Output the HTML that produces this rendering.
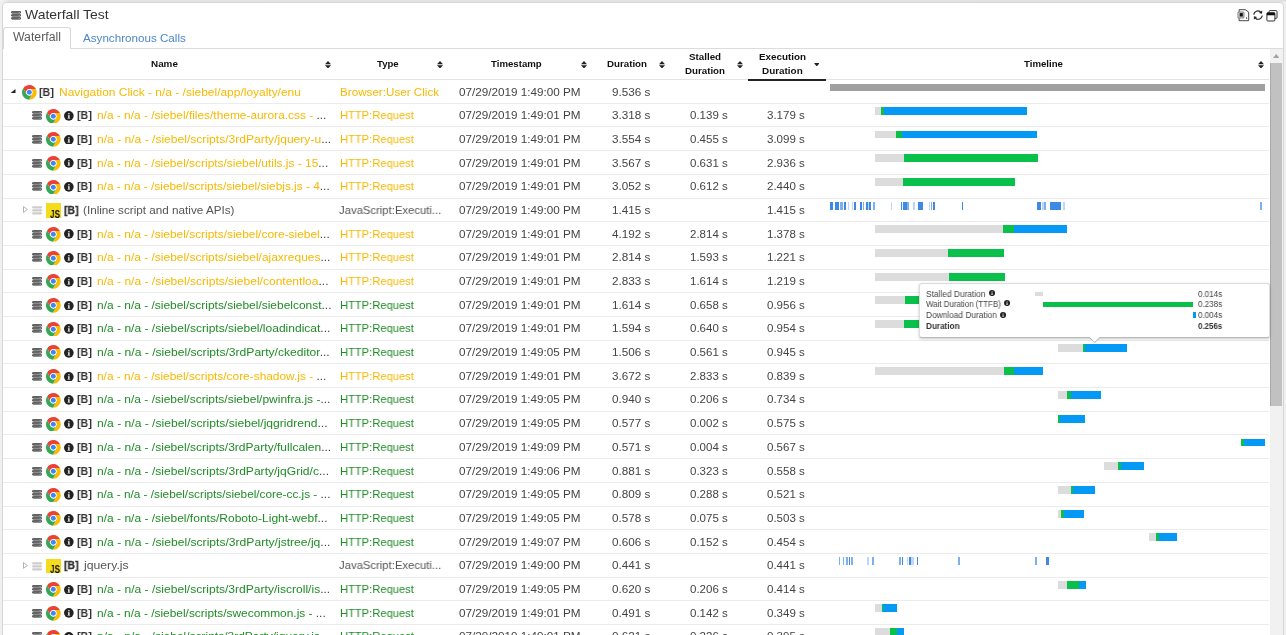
<!DOCTYPE html>
<html><head><meta charset="utf-8"><title>Waterfall Test</title>
<style>
html,body{margin:0;padding:0;}
body{width:1286px;height:635px;overflow:hidden;background:#f0f0f0;position:relative;font-family:"Liberation Sans", sans-serif;}
.ab{position:absolute;}
.t{position:absolute;white-space:pre;will-change:transform;}
</style></head><body>

<div class="ab" style="left:0;top:0;width:1286px;height:2.4px;background:linear-gradient(90deg,#f4f4f4 0,#e3e3e3 10px,#e2e2e2 100%)"></div>
<div class="ab" style="left:2px;top:2px;width:1282.3px;height:640px;background:#fff;border:1px solid #d6d6d6;border-radius:4px;box-sizing:border-box"></div>
<svg class="ab" style="left:11px;top:11px" width="10.2" height="9" viewBox="0 0 10.2 9"><rect x="0.35" y="0.45" width="9.5" height="1.7" rx="0.85" fill="#7a7a7a" stroke="#333" stroke-width="0.7"/><rect x="7.7" y="0.9" width="1" height="0.8" fill="#c8c8c8"/><rect x="0.35" y="3.45" width="9.5" height="1.7" rx="0.85" fill="#7a7a7a" stroke="#333" stroke-width="0.7"/><rect x="7.7" y="3.9" width="1" height="0.8" fill="#c8c8c8"/><rect x="0.35" y="6.45" width="9.5" height="1.7" rx="0.85" fill="#7a7a7a" stroke="#333" stroke-width="0.7"/><rect x="7.7" y="6.9" width="1" height="0.8" fill="#c8c8c8"/></svg>
<div class="t" style="left:25.25px;top:8.32px;font-size:13px;line-height:14.95px;color:#333;font-weight:normal;transform:scaleX(1.0727);transform-origin:0 0;">Waterfall Test</div>
<div class="ab" style="left:3px;top:48px;width:1280px;height:1px;background:#dcdcdc"></div>
<div class="ab" style="left:2.6px;top:27px;width:68px;height:22px;background:#fff;border:1px solid #d8d8d8;border-bottom:none;border-radius:3px 3px 0 0;box-sizing:border-box"></div>
<div class="t" style="left:12.85px;top:31.24px;font-size:12px;line-height:13.8px;color:#5a5a5a;font-weight:normal;transform:scaleX(1.0214);transform-origin:0 0;">Waterfall</div>
<div class="t" style="left:82.95px;top:31.6px;font-size:11.5px;line-height:13.22px;color:#4a88cc;font-weight:normal;transform:scaleX(1.0116);transform-origin:0 0;">Asynchronous Calls</div>
<div class="ab" style="left:3px;top:79px;width:1266px;height:1px;background:#e3e3e3"></div>
<div class="ab" style="left:748px;top:78.6px;width:77.5px;height:2px;background:#222"></div>


<svg class="ab" style="left:1237px;top:9px" width="13" height="13" viewBox="0 0 13 13">
 <path d="M2.1 0.7 H8.3 L11.7 3.1 V11.7 H2.1 Z" fill="#fff" stroke="#333" stroke-width="0.9"/>
 <rect x="0.4" y="2.4" width="7.1" height="7.1" rx="1.5" fill="#8a8a8a"/>
 <rect x="1.4" y="3.4" width="5.1" height="5.1" rx="0.8" fill="#c9c9c9"/>
 <rect x="2.7" y="4.1" width="3.1" height="3.4" fill="#111"/>
 <rect x="9.2" y="8.3" width="0.9" height="1.6" fill="#333"/>
</svg>
<svg class="ab" style="left:1252.9px;top:9.7px" width="10" height="10" viewBox="0 0 10 10">
 <path d="M0.7 4.6 A4.2 4.2 0 0 1 7.6 1.9" fill="none" stroke="#222" stroke-width="1.15"/>
 <path d="M9.1 0.4 L9.1 3.7 L5.9 3.0 Z" fill="#222"/>
 <path d="M9.3 5.5 A4.2 4.2 0 0 1 2.4 8.2" fill="none" stroke="#222" stroke-width="1.15"/>
 <path d="M0.9 9.6 L0.9 6.3 L4.1 7.0 Z" fill="#222"/>
</svg>
<svg class="ab" style="left:1265.6px;top:10px" width="12" height="12" viewBox="0 0 12 12">
 <rect x="3.1" y="0.6" width="7.9" height="7.8" rx="1" fill="#fff" stroke="#333" stroke-width="1"/>
 <rect x="0.9" y="2.7" width="8" height="8.3" rx="1" fill="#fff" stroke="#333" stroke-width="1"/>
 <rect x="0.9" y="2.7" width="8" height="2.6" fill="#111"/>
</svg>

<div class="t" style="left:151.35px;top:59.35px;font-size:9.5px;line-height:10.92px;color:#111;font-weight:bold;transform:scaleX(1.0395);transform-origin:0 0;">Name</div>
<svg class="ab" style="left:325px;top:60.7px" width="6" height="7.5" viewBox="0 0 6 7.5"><path d="M3 0 L6 3.2 H0 Z M0 4.3 H6 L3 7.5 Z" fill="#222"/></svg>
<div class="t" style="left:376.95px;top:59.35px;font-size:9.5px;line-height:10.92px;color:#111;font-weight:bold;transform:scaleX(1.0107);transform-origin:0 0;">Type</div>
<svg class="ab" style="left:436.5px;top:60.7px" width="6" height="7.5" viewBox="0 0 6 7.5"><path d="M3 0 L6 3.2 H0 Z M0 4.3 H6 L3 7.5 Z" fill="#222"/></svg>
<div class="t" style="left:490.75px;top:59.35px;font-size:9.5px;line-height:10.92px;color:#111;font-weight:bold;transform:scaleX(1.0144);transform-origin:0 0;">Timestamp</div>
<svg class="ab" style="left:581.1px;top:60.7px" width="6" height="7.5" viewBox="0 0 6 7.5"><path d="M3 0 L6 3.2 H0 Z M0 4.3 H6 L3 7.5 Z" fill="#222"/></svg>
<div class="t" style="left:606.95px;top:59.35px;font-size:9.5px;line-height:10.92px;color:#111;font-weight:bold;transform:scaleX(1.0242);transform-origin:0 0;">Duration</div>
<svg class="ab" style="left:659px;top:60.7px" width="6" height="7.5" viewBox="0 0 6 7.5"><path d="M3 0 L6 3.2 H0 Z M0 4.3 H6 L3 7.5 Z" fill="#222"/></svg>
<div class="t" style="left:688.55px;top:51.85px;font-size:9.5px;line-height:10.92px;color:#111;font-weight:bold;transform:scaleX(1.0305);transform-origin:0 0;">Stalled</div>
<div class="t" style="left:684.75px;top:66.35px;font-size:9.5px;line-height:10.92px;color:#111;font-weight:bold;transform:scaleX(1.0242);transform-origin:0 0;">Duration</div>
<svg class="ab" style="left:736.5px;top:60.7px" width="6" height="7.5" viewBox="0 0 6 7.5"><path d="M3 0 L6 3.2 H0 Z M0 4.3 H6 L3 7.5 Z" fill="#222"/></svg>
<div class="t" style="left:758.65px;top:51.85px;font-size:9.5px;line-height:10.92px;color:#111;font-weight:bold;transform:scaleX(1.0330);transform-origin:0 0;">Execution</div>
<div class="t" style="left:761.85px;top:66.35px;font-size:9.5px;line-height:10.92px;color:#111;font-weight:bold;transform:scaleX(1.0421);transform-origin:0 0;">Duration</div>
<svg class="ab" style="left:813.9px;top:62.5px" width="5.6" height="3.5" viewBox="0 0 5.6 3.5"><path d="M0 0 H5.6 L2.8 3.5 Z" fill="#222"/></svg>
<div class="t" style="left:1023.55px;top:59.35px;font-size:9.5px;line-height:10.92px;color:#111;font-weight:bold;transform:scaleX(1.0138);transform-origin:0 0;">Timeline</div>
<svg class="ab" style="left:1258px;top:60.8px" width="6" height="7.5" viewBox="0 0 6 7.5"><path d="M3 0 L6 3.2 H0 Z M0 4.3 H6 L3 7.5 Z" fill="#222"/></svg>
<div class="ab" style="left:3px;top:102.79px;width:1266px;height:1px;background:#ececec"></div>
<svg class="ab" style="left:10.4px;top:88.6px" width="5.5" height="4.5" viewBox="0 0 5.5 4.5"><path d="M5.5 0 V4.5 H0 Z" fill="#222"/></svg>
<svg class="ab" style="left:22.05px;top:85.05px" width="14.7" height="14.7" viewBox="-10 -10 20 20"><path d="M0.000 -4.500 L8.930 -4.500 A10 10 0 0 0 -8.362 -5.484 L-3.897 2.250 A4.5 4.5 0 0 1 0.000 -4.500 Z" fill="#ea4335"/><path d="M0.000 -4.500 L8.930 -4.500 A10 10 0 0 0 -8.362 -5.484 L-3.897 2.250 A4.5 4.5 0 0 1 0.000 -4.500 Z" fill="#fbbc05" transform="rotate(120)"/><path d="M0.000 -4.500 L8.930 -4.500 A10 10 0 0 0 -8.362 -5.484 L-3.897 2.250 A4.5 4.5 0 0 1 0.000 -4.500 Z" fill="#34a853" transform="rotate(240)"/><circle r="4.15" fill="#fff"/><circle r="3.4" fill="#4285f4"/></svg>
<div class="t" style="left:38.85px;top:85.5px;font-size:11.5px;line-height:13.22px;color:#333;font-weight:bold;transform:scaleX(0.9272);transform-origin:0 0;">[B]</div>
<div class="t" style="left:59.05px;top:85.5px;font-size:11.5px;line-height:13.22px;color:#f8b800;font-weight:-webkit-text-stroke:0.15px #f8b800;;transform:scaleX(1.0396);transform-origin:0 0;">Navigation Click - n/a - /siebel/app/loyalty/enu</div>
<div class="t" style="left:339.95px;top:85.5px;font-size:11.5px;line-height:13.22px;color:#f8b800;font-weight:-webkit-text-stroke:0.15px #f8b800;;transform:scaleX(1.0135);transform-origin:0 0;">Browser:User Click</div>
<div class="t" style="left:458.85px;top:85.5px;font-size:11.5px;line-height:13.22px;color:#444;font-weight:normal;transform:scaleX(1.0162);transform-origin:0 0;">07/29/2019 1:49:00 PM</div>
<div class="t" style="left:612.15px;top:85.5px;font-size:11.5px;line-height:13.22px;color:#444;font-weight:normal;transform:scaleX(1.0180);transform-origin:0 0;">9.536 s</div>
<div class="ab" style="left:829.8px;top:83.5px;width:435.5px;height:7.6px;background:#a0a0a0"></div>
<div class="ab" style="left:3px;top:126.48px;width:1266px;height:1px;background:#ececec"></div>
<svg class="ab" style="left:32.3px;top:111px" width="10.2" height="9" viewBox="0 0 10.2 9"><rect x="0.35" y="0.45" width="9.5" height="1.7" rx="0.85" fill="#7a7a7a" stroke="#333" stroke-width="0.7"/><rect x="7.7" y="0.9" width="1" height="0.8" fill="#c8c8c8"/><rect x="0.35" y="3.45" width="9.5" height="1.7" rx="0.85" fill="#7a7a7a" stroke="#333" stroke-width="0.7"/><rect x="7.7" y="3.9" width="1" height="0.8" fill="#c8c8c8"/><rect x="0.35" y="6.45" width="9.5" height="1.7" rx="0.85" fill="#7a7a7a" stroke="#333" stroke-width="0.7"/><rect x="7.7" y="6.9" width="1" height="0.8" fill="#c8c8c8"/></svg>
<svg class="ab" style="left:46.2px;top:108.59px" width="14.7" height="14.7" viewBox="-10 -10 20 20"><path d="M0.000 -4.500 L8.930 -4.500 A10 10 0 0 0 -8.362 -5.484 L-3.897 2.250 A4.5 4.5 0 0 1 0.000 -4.500 Z" fill="#ea4335"/><path d="M0.000 -4.500 L8.930 -4.500 A10 10 0 0 0 -8.362 -5.484 L-3.897 2.250 A4.5 4.5 0 0 1 0.000 -4.500 Z" fill="#fbbc05" transform="rotate(120)"/><path d="M0.000 -4.500 L8.930 -4.500 A10 10 0 0 0 -8.362 -5.484 L-3.897 2.250 A4.5 4.5 0 0 1 0.000 -4.500 Z" fill="#34a853" transform="rotate(240)"/><circle r="4.15" fill="#fff"/><circle r="3.4" fill="#4285f4"/></svg>
<svg class="ab" style="left:64.2px;top:110.99px" width="9.7" height="9.7" viewBox="-5 -5 10 10"><circle r="5" fill="#222"/><circle cx="0.1" cy="-2.2" r="0.75" fill="#fff"/><path d="M-1.1 -0.7 H0.75 V2.1 H1.4 V2.8 H-1.4 V2.1 H-0.65 V-0.1 H-1.1 Z" fill="#fff"/></svg>
<div class="t" style="left:76.95px;top:109.19px;font-size:11.5px;line-height:13.22px;color:#333;font-weight:bold;transform:scaleX(0.9272);transform-origin:0 0;">[B]</div>
<div class="t" style="left:97.15px;top:109.19px;font-size:11.5px;line-height:13.22px;color:#f8b800;font-weight:-webkit-text-stroke:0.15px #f8b800;;transform:scaleX(1.0344);transform-origin:0 0;">n/a - n/a - /siebel/files/theme-aurora.css - <span style="color:#444;-webkit-text-stroke:0">...</span></div>
<div class="t" style="left:339.95px;top:109.19px;font-size:11.5px;line-height:13.22px;color:#f8b800;font-weight:-webkit-text-stroke:0.15px #f8b800;;transform:scaleX(0.9717);transform-origin:0 0;">HTTP:Request</div>
<div class="t" style="left:458.85px;top:109.19px;font-size:11.5px;line-height:13.22px;color:#444;font-weight:normal;transform:scaleX(1.0162);transform-origin:0 0;">07/29/2019 1:49:01 PM</div>
<div class="t" style="left:612.15px;top:109.19px;font-size:11.5px;line-height:13.22px;color:#444;font-weight:normal;transform:scaleX(1.0180);transform-origin:0 0;">3.318 s</div>
<div class="t" style="left:690.15px;top:109.19px;font-size:11.5px;line-height:13.22px;color:#444;font-weight:normal;transform:scaleX(0.9995);transform-origin:0 0;">0.139 s</div>
<div class="t" style="left:767.45px;top:109.19px;font-size:11.5px;line-height:13.22px;color:#444;font-weight:normal;transform:scaleX(1.0021);transform-origin:0 0;">3.179 s</div>
<div class="ab" style="left:875px;top:106.89px;width:6.6px;height:7.9px;background:#dcdcdc"></div>
<div class="ab" style="left:881px;top:106.89px;width:3.2px;height:7.9px;background:#08c04a"></div>
<div class="ab" style="left:883.6px;top:106.89px;width:143px;height:7.9px;background:#0399f5"></div>
<div class="ab" style="left:3px;top:150.17px;width:1266px;height:1px;background:#ececec"></div>
<svg class="ab" style="left:32.3px;top:135px" width="10.2" height="9" viewBox="0 0 10.2 9"><rect x="0.35" y="0.45" width="9.5" height="1.7" rx="0.85" fill="#7a7a7a" stroke="#333" stroke-width="0.7"/><rect x="7.7" y="0.9" width="1" height="0.8" fill="#c8c8c8"/><rect x="0.35" y="3.45" width="9.5" height="1.7" rx="0.85" fill="#7a7a7a" stroke="#333" stroke-width="0.7"/><rect x="7.7" y="3.9" width="1" height="0.8" fill="#c8c8c8"/><rect x="0.35" y="6.45" width="9.5" height="1.7" rx="0.85" fill="#7a7a7a" stroke="#333" stroke-width="0.7"/><rect x="7.7" y="6.9" width="1" height="0.8" fill="#c8c8c8"/></svg>
<svg class="ab" style="left:46.2px;top:132.28px" width="14.7" height="14.7" viewBox="-10 -10 20 20"><path d="M0.000 -4.500 L8.930 -4.500 A10 10 0 0 0 -8.362 -5.484 L-3.897 2.250 A4.5 4.5 0 0 1 0.000 -4.500 Z" fill="#ea4335"/><path d="M0.000 -4.500 L8.930 -4.500 A10 10 0 0 0 -8.362 -5.484 L-3.897 2.250 A4.5 4.5 0 0 1 0.000 -4.500 Z" fill="#fbbc05" transform="rotate(120)"/><path d="M0.000 -4.500 L8.930 -4.500 A10 10 0 0 0 -8.362 -5.484 L-3.897 2.250 A4.5 4.5 0 0 1 0.000 -4.500 Z" fill="#34a853" transform="rotate(240)"/><circle r="4.15" fill="#fff"/><circle r="3.4" fill="#4285f4"/></svg>
<svg class="ab" style="left:64.2px;top:134.68px" width="9.7" height="9.7" viewBox="-5 -5 10 10"><circle r="5" fill="#222"/><circle cx="0.1" cy="-2.2" r="0.75" fill="#fff"/><path d="M-1.1 -0.7 H0.75 V2.1 H1.4 V2.8 H-1.4 V2.1 H-0.65 V-0.1 H-1.1 Z" fill="#fff"/></svg>
<div class="t" style="left:76.95px;top:132.88px;font-size:11.5px;line-height:13.22px;color:#333;font-weight:bold;transform:scaleX(0.9272);transform-origin:0 0;">[B]</div>
<div class="t" style="left:97.15px;top:132.88px;font-size:11.5px;line-height:13.22px;color:#f8b800;font-weight:-webkit-text-stroke:0.15px #f8b800;;transform:scaleX(1.0499);transform-origin:0 0;">n/a - n/a - /siebel/scripts/3rdParty/jquery-u<span style="color:#444;-webkit-text-stroke:0">...</span></div>
<div class="t" style="left:339.95px;top:132.88px;font-size:11.5px;line-height:13.22px;color:#f8b800;font-weight:-webkit-text-stroke:0.15px #f8b800;;transform:scaleX(0.9717);transform-origin:0 0;">HTTP:Request</div>
<div class="t" style="left:458.85px;top:132.88px;font-size:11.5px;line-height:13.22px;color:#444;font-weight:normal;transform:scaleX(1.0162);transform-origin:0 0;">07/29/2019 1:49:01 PM</div>
<div class="t" style="left:612.15px;top:132.88px;font-size:11.5px;line-height:13.22px;color:#444;font-weight:normal;transform:scaleX(1.0180);transform-origin:0 0;">3.554 s</div>
<div class="t" style="left:690.15px;top:132.88px;font-size:11.5px;line-height:13.22px;color:#444;font-weight:normal;transform:scaleX(0.9995);transform-origin:0 0;">0.455 s</div>
<div class="t" style="left:767.45px;top:132.88px;font-size:11.5px;line-height:13.22px;color:#444;font-weight:normal;transform:scaleX(1.0021);transform-origin:0 0;">3.099 s</div>
<div class="ab" style="left:875px;top:130.58px;width:21.5px;height:7.9px;background:#dcdcdc"></div>
<div class="ab" style="left:895.9px;top:130.58px;width:6.9px;height:7.9px;background:#08c04a"></div>
<div class="ab" style="left:902.2px;top:130.58px;width:135.3px;height:7.9px;background:#0399f5"></div>
<div class="ab" style="left:3px;top:173.86px;width:1266px;height:1px;background:#ececec"></div>
<svg class="ab" style="left:32.3px;top:159px" width="10.2" height="9" viewBox="0 0 10.2 9"><rect x="0.35" y="0.45" width="9.5" height="1.7" rx="0.85" fill="#7a7a7a" stroke="#333" stroke-width="0.7"/><rect x="7.7" y="0.9" width="1" height="0.8" fill="#c8c8c8"/><rect x="0.35" y="3.45" width="9.5" height="1.7" rx="0.85" fill="#7a7a7a" stroke="#333" stroke-width="0.7"/><rect x="7.7" y="3.9" width="1" height="0.8" fill="#c8c8c8"/><rect x="0.35" y="6.45" width="9.5" height="1.7" rx="0.85" fill="#7a7a7a" stroke="#333" stroke-width="0.7"/><rect x="7.7" y="6.9" width="1" height="0.8" fill="#c8c8c8"/></svg>
<svg class="ab" style="left:46.2px;top:155.97px" width="14.7" height="14.7" viewBox="-10 -10 20 20"><path d="M0.000 -4.500 L8.930 -4.500 A10 10 0 0 0 -8.362 -5.484 L-3.897 2.250 A4.5 4.5 0 0 1 0.000 -4.500 Z" fill="#ea4335"/><path d="M0.000 -4.500 L8.930 -4.500 A10 10 0 0 0 -8.362 -5.484 L-3.897 2.250 A4.5 4.5 0 0 1 0.000 -4.500 Z" fill="#fbbc05" transform="rotate(120)"/><path d="M0.000 -4.500 L8.930 -4.500 A10 10 0 0 0 -8.362 -5.484 L-3.897 2.250 A4.5 4.5 0 0 1 0.000 -4.500 Z" fill="#34a853" transform="rotate(240)"/><circle r="4.15" fill="#fff"/><circle r="3.4" fill="#4285f4"/></svg>
<svg class="ab" style="left:64.2px;top:158.37px" width="9.7" height="9.7" viewBox="-5 -5 10 10"><circle r="5" fill="#222"/><circle cx="0.1" cy="-2.2" r="0.75" fill="#fff"/><path d="M-1.1 -0.7 H0.75 V2.1 H1.4 V2.8 H-1.4 V2.1 H-0.65 V-0.1 H-1.1 Z" fill="#fff"/></svg>
<div class="t" style="left:76.95px;top:156.57px;font-size:11.5px;line-height:13.22px;color:#333;font-weight:bold;transform:scaleX(0.9272);transform-origin:0 0;">[B]</div>
<div class="t" style="left:97.15px;top:156.57px;font-size:11.5px;line-height:13.22px;color:#f8b800;font-weight:-webkit-text-stroke:0.15px #f8b800;;transform:scaleX(1.0365);transform-origin:0 0;">n/a - n/a - /siebel/scripts/siebel/utils.js - 15<span style="color:#444;-webkit-text-stroke:0">...</span></div>
<div class="t" style="left:339.95px;top:156.57px;font-size:11.5px;line-height:13.22px;color:#f8b800;font-weight:-webkit-text-stroke:0.15px #f8b800;;transform:scaleX(0.9717);transform-origin:0 0;">HTTP:Request</div>
<div class="t" style="left:458.85px;top:156.57px;font-size:11.5px;line-height:13.22px;color:#444;font-weight:normal;transform:scaleX(1.0162);transform-origin:0 0;">07/29/2019 1:49:01 PM</div>
<div class="t" style="left:612.15px;top:156.57px;font-size:11.5px;line-height:13.22px;color:#444;font-weight:normal;transform:scaleX(1.0180);transform-origin:0 0;">3.567 s</div>
<div class="t" style="left:690.15px;top:156.57px;font-size:11.5px;line-height:13.22px;color:#444;font-weight:normal;transform:scaleX(0.9995);transform-origin:0 0;">0.631 s</div>
<div class="t" style="left:767.45px;top:156.57px;font-size:11.5px;line-height:13.22px;color:#444;font-weight:normal;transform:scaleX(1.0021);transform-origin:0 0;">2.936 s</div>
<div class="ab" style="left:875px;top:154.27px;width:29.4px;height:7.9px;background:#dcdcdc"></div>
<div class="ab" style="left:903.8px;top:154.27px;width:134.6px;height:7.9px;background:#08c04a"></div>
<div class="ab" style="left:3px;top:197.55px;width:1266px;height:1px;background:#ececec"></div>
<svg class="ab" style="left:32.3px;top:182px" width="10.2" height="9" viewBox="0 0 10.2 9"><rect x="0.35" y="0.45" width="9.5" height="1.7" rx="0.85" fill="#7a7a7a" stroke="#333" stroke-width="0.7"/><rect x="7.7" y="0.9" width="1" height="0.8" fill="#c8c8c8"/><rect x="0.35" y="3.45" width="9.5" height="1.7" rx="0.85" fill="#7a7a7a" stroke="#333" stroke-width="0.7"/><rect x="7.7" y="3.9" width="1" height="0.8" fill="#c8c8c8"/><rect x="0.35" y="6.45" width="9.5" height="1.7" rx="0.85" fill="#7a7a7a" stroke="#333" stroke-width="0.7"/><rect x="7.7" y="6.9" width="1" height="0.8" fill="#c8c8c8"/></svg>
<svg class="ab" style="left:46.2px;top:179.66px" width="14.7" height="14.7" viewBox="-10 -10 20 20"><path d="M0.000 -4.500 L8.930 -4.500 A10 10 0 0 0 -8.362 -5.484 L-3.897 2.250 A4.5 4.5 0 0 1 0.000 -4.500 Z" fill="#ea4335"/><path d="M0.000 -4.500 L8.930 -4.500 A10 10 0 0 0 -8.362 -5.484 L-3.897 2.250 A4.5 4.5 0 0 1 0.000 -4.500 Z" fill="#fbbc05" transform="rotate(120)"/><path d="M0.000 -4.500 L8.930 -4.500 A10 10 0 0 0 -8.362 -5.484 L-3.897 2.250 A4.5 4.5 0 0 1 0.000 -4.500 Z" fill="#34a853" transform="rotate(240)"/><circle r="4.15" fill="#fff"/><circle r="3.4" fill="#4285f4"/></svg>
<svg class="ab" style="left:64.2px;top:182.06px" width="9.7" height="9.7" viewBox="-5 -5 10 10"><circle r="5" fill="#222"/><circle cx="0.1" cy="-2.2" r="0.75" fill="#fff"/><path d="M-1.1 -0.7 H0.75 V2.1 H1.4 V2.8 H-1.4 V2.1 H-0.65 V-0.1 H-1.1 Z" fill="#fff"/></svg>
<div class="t" style="left:76.95px;top:180.26px;font-size:11.5px;line-height:13.22px;color:#333;font-weight:bold;transform:scaleX(0.9272);transform-origin:0 0;">[B]</div>
<div class="t" style="left:97.15px;top:180.26px;font-size:11.5px;line-height:13.22px;color:#f8b800;font-weight:-webkit-text-stroke:0.15px #f8b800;;transform:scaleX(1.0314);transform-origin:0 0;">n/a - n/a - /siebel/scripts/siebel/siebjs.js - 4<span style="color:#444;-webkit-text-stroke:0">...</span></div>
<div class="t" style="left:339.95px;top:180.26px;font-size:11.5px;line-height:13.22px;color:#f8b800;font-weight:-webkit-text-stroke:0.15px #f8b800;;transform:scaleX(0.9717);transform-origin:0 0;">HTTP:Request</div>
<div class="t" style="left:458.85px;top:180.26px;font-size:11.5px;line-height:13.22px;color:#444;font-weight:normal;transform:scaleX(1.0162);transform-origin:0 0;">07/29/2019 1:49:01 PM</div>
<div class="t" style="left:612.15px;top:180.26px;font-size:11.5px;line-height:13.22px;color:#444;font-weight:normal;transform:scaleX(1.0180);transform-origin:0 0;">3.052 s</div>
<div class="t" style="left:690.15px;top:180.26px;font-size:11.5px;line-height:13.22px;color:#444;font-weight:normal;transform:scaleX(0.9995);transform-origin:0 0;">0.612 s</div>
<div class="t" style="left:767.45px;top:180.26px;font-size:11.5px;line-height:13.22px;color:#444;font-weight:normal;transform:scaleX(1.0021);transform-origin:0 0;">2.440 s</div>
<div class="ab" style="left:875px;top:177.96px;width:28.4px;height:7.9px;background:#dcdcdc"></div>
<div class="ab" style="left:902.8px;top:177.96px;width:112.3px;height:7.9px;background:#08c04a"></div>
<div class="ab" style="left:3px;top:221.24px;width:1266px;height:1px;background:#ececec"></div>
<svg class="ab" style="left:23.3px;top:206.25px" width="5" height="7" viewBox="0 0 5 7"><path d="M0.5 0.6 L4.4 3.5 L0.5 6.4 Z" fill="none" stroke="#aaa" stroke-width="0.9"/></svg>
<svg class="ab" style="left:32.4px;top:206px" width="10.2" height="9" viewBox="0 0 10.2 9"><rect x="0" y="0.15" width="10.2" height="2.3" rx="1.1" fill="#cdcdcd"/><rect x="0" y="3.15" width="10.2" height="2.3" rx="1.1" fill="#cdcdcd"/><rect x="0" y="6.15" width="10.2" height="2.3" rx="1.1" fill="#cdcdcd"/></svg>
<div class="ab" style="left:46.1px;top:203.25px;width:14.8px;height:14.4px;background:#f4dc1c"></div>
<div class="t" style="left:50.25px;top:208.53px;font-size:10px;line-height:11.5px;color:#111;font-weight:bold;transform:scaleX(0.8258);transform-origin:0 0;">JS</div>
<div class="t" style="left:63.75px;top:203.95px;font-size:11.5px;line-height:13.22px;color:#333;font-weight:bold;transform:scaleX(0.9084);transform-origin:0 0;-webkit-text-stroke:0.3px #333;">[B]</div>
<div class="t" style="left:83.35px;top:203.95px;font-size:11.5px;line-height:13.22px;color:#555;font-weight:normal;transform:scaleX(1.0172);transform-origin:0 0;">(Inline script and native APIs)</div>
<div class="t" style="left:338.85px;top:203.95px;font-size:11.5px;line-height:13.22px;color:#555;font-weight:;transform:scaleX(0.9820);transform-origin:0 0;">JavaScript:Executi...</div>
<div class="t" style="left:458.85px;top:203.95px;font-size:11.5px;line-height:13.22px;color:#444;font-weight:normal;transform:scaleX(1.0162);transform-origin:0 0;">07/29/2019 1:49:00 PM</div>
<div class="t" style="left:612.15px;top:203.95px;font-size:11.5px;line-height:13.22px;color:#444;font-weight:normal;transform:scaleX(1.0180);transform-origin:0 0;">1.415 s</div>
<div class="t" style="left:767.45px;top:203.95px;font-size:11.5px;line-height:13.22px;color:#444;font-weight:normal;transform:scaleX(1.0021);transform-origin:0 0;">1.415 s</div>
<div class="ab" style="left:830.1px;top:201.75px;width:2.7px;height:8px;background:#3f89e6"></div>
<div class="ab" style="left:834.6px;top:201.75px;width:4.5px;height:8px;background:#3f89e6"></div>
<div class="ab" style="left:839.8px;top:201.75px;width:3.2px;height:8px;background:#7cb0ee"></div>
<div class="ab" style="left:843.7px;top:201.75px;width:2.6px;height:8px;background:#3f89e6"></div>
<div class="ab" style="left:847.9px;top:201.75px;width:1.4px;height:8px;background:#bcd7f7"></div>
<div class="ab" style="left:851.9px;top:201.75px;width:1.1px;height:8px;background:#bcd7f7"></div>
<div class="ab" style="left:853.9px;top:201.75px;width:1.7px;height:8px;background:#3f89e6"></div>
<div class="ab" style="left:860.1px;top:201.75px;width:1.8px;height:8px;background:#3f89e6"></div>
<div class="ab" style="left:863px;top:201.75px;width:1px;height:8px;background:#7cb0ee"></div>
<div class="ab" style="left:865.9px;top:201.75px;width:1.9px;height:8px;background:#3f89e6"></div>
<div class="ab" style="left:867.8px;top:201.75px;width:0.9px;height:8px;background:#bcd7f7"></div>
<div class="ab" style="left:868.7px;top:201.75px;width:1.9px;height:8px;background:#3f89e6"></div>
<div class="ab" style="left:872.9px;top:201.75px;width:2.1px;height:8px;background:#7cb0ee"></div>
<div class="ab" style="left:891.1px;top:201.75px;width:1.4px;height:8px;background:#bcd7f7"></div>
<div class="ab" style="left:900.6px;top:201.75px;width:1.3px;height:8px;background:#3f89e6"></div>
<div class="ab" style="left:903.4px;top:201.75px;width:3.6px;height:8px;background:#3f89e6"></div>
<div class="ab" style="left:907px;top:201.75px;width:1.9px;height:8px;background:#7cb0ee"></div>
<div class="ab" style="left:913.1px;top:201.75px;width:1.5px;height:8px;background:#bcd7f7"></div>
<div class="ab" style="left:918px;top:201.75px;width:5.1px;height:8px;background:#3f89e6"></div>
<div class="ab" style="left:929px;top:201.75px;width:0.9px;height:8px;background:#bcd7f7"></div>
<div class="ab" style="left:930.9px;top:201.75px;width:1.3px;height:8px;background:#7cb0ee"></div>
<div class="ab" style="left:932.9px;top:201.75px;width:2.1px;height:8px;background:#3f89e6"></div>
<div class="ab" style="left:961.9px;top:201.75px;width:1.2px;height:8px;background:#3f89e6"></div>
<div class="ab" style="left:1036.9px;top:201.75px;width:4.5px;height:8px;background:#3f89e6"></div>
<div class="ab" style="left:1041.9px;top:201.75px;width:1.9px;height:8px;background:#bcd7f7"></div>
<div class="ab" style="left:1043.8px;top:201.75px;width:1.8px;height:8px;background:#7cb0ee"></div>
<div class="ab" style="left:1049.8px;top:201.75px;width:11.7px;height:8px;background:#3f89e6"></div>
<div class="ab" style="left:1063.1px;top:201.75px;width:1.8px;height:8px;background:#bcd7f7"></div>
<div class="ab" style="left:1260.2px;top:201.75px;width:1.8px;height:8px;background:#7cb0ee"></div>
<div class="ab" style="left:3px;top:244.93px;width:1266px;height:1px;background:#ececec"></div>
<svg class="ab" style="left:32.3px;top:230px" width="10.2" height="9" viewBox="0 0 10.2 9"><rect x="0.35" y="0.45" width="9.5" height="1.7" rx="0.85" fill="#7a7a7a" stroke="#333" stroke-width="0.7"/><rect x="7.7" y="0.9" width="1" height="0.8" fill="#c8c8c8"/><rect x="0.35" y="3.45" width="9.5" height="1.7" rx="0.85" fill="#7a7a7a" stroke="#333" stroke-width="0.7"/><rect x="7.7" y="3.9" width="1" height="0.8" fill="#c8c8c8"/><rect x="0.35" y="6.45" width="9.5" height="1.7" rx="0.85" fill="#7a7a7a" stroke="#333" stroke-width="0.7"/><rect x="7.7" y="6.9" width="1" height="0.8" fill="#c8c8c8"/></svg>
<svg class="ab" style="left:46.2px;top:227.04px" width="14.7" height="14.7" viewBox="-10 -10 20 20"><path d="M0.000 -4.500 L8.930 -4.500 A10 10 0 0 0 -8.362 -5.484 L-3.897 2.250 A4.5 4.5 0 0 1 0.000 -4.500 Z" fill="#ea4335"/><path d="M0.000 -4.500 L8.930 -4.500 A10 10 0 0 0 -8.362 -5.484 L-3.897 2.250 A4.5 4.5 0 0 1 0.000 -4.500 Z" fill="#fbbc05" transform="rotate(120)"/><path d="M0.000 -4.500 L8.930 -4.500 A10 10 0 0 0 -8.362 -5.484 L-3.897 2.250 A4.5 4.5 0 0 1 0.000 -4.500 Z" fill="#34a853" transform="rotate(240)"/><circle r="4.15" fill="#fff"/><circle r="3.4" fill="#4285f4"/></svg>
<svg class="ab" style="left:64.2px;top:229.44px" width="9.7" height="9.7" viewBox="-5 -5 10 10"><circle r="5" fill="#222"/><circle cx="0.1" cy="-2.2" r="0.75" fill="#fff"/><path d="M-1.1 -0.7 H0.75 V2.1 H1.4 V2.8 H-1.4 V2.1 H-0.65 V-0.1 H-1.1 Z" fill="#fff"/></svg>
<div class="t" style="left:76.95px;top:227.64px;font-size:11.5px;line-height:13.22px;color:#333;font-weight:bold;transform:scaleX(0.9272);transform-origin:0 0;">[B]</div>
<div class="t" style="left:97.15px;top:227.64px;font-size:11.5px;line-height:13.22px;color:#f8b800;font-weight:-webkit-text-stroke:0.15px #f8b800;;transform:scaleX(1.0373);transform-origin:0 0;">n/a - n/a - /siebel/scripts/siebel/core-siebel<span style="color:#444;-webkit-text-stroke:0">...</span></div>
<div class="t" style="left:339.95px;top:227.64px;font-size:11.5px;line-height:13.22px;color:#f8b800;font-weight:-webkit-text-stroke:0.15px #f8b800;;transform:scaleX(0.9717);transform-origin:0 0;">HTTP:Request</div>
<div class="t" style="left:458.85px;top:227.64px;font-size:11.5px;line-height:13.22px;color:#444;font-weight:normal;transform:scaleX(1.0162);transform-origin:0 0;">07/29/2019 1:49:01 PM</div>
<div class="t" style="left:612.15px;top:227.64px;font-size:11.5px;line-height:13.22px;color:#444;font-weight:normal;transform:scaleX(1.0180);transform-origin:0 0;">4.192 s</div>
<div class="t" style="left:690.15px;top:227.64px;font-size:11.5px;line-height:13.22px;color:#444;font-weight:normal;transform:scaleX(0.9995);transform-origin:0 0;">2.814 s</div>
<div class="t" style="left:767.45px;top:227.64px;font-size:11.5px;line-height:13.22px;color:#444;font-weight:normal;transform:scaleX(1.0021);transform-origin:0 0;">1.378 s</div>
<div class="ab" style="left:875px;top:225.34px;width:129px;height:7.9px;background:#dcdcdc"></div>
<div class="ab" style="left:1003.4px;top:225.34px;width:10.8px;height:7.9px;background:#08c04a"></div>
<div class="ab" style="left:1013.6px;top:225.34px;width:53.4px;height:7.9px;background:#0399f5"></div>
<div class="ab" style="left:3px;top:268.62px;width:1266px;height:1px;background:#ececec"></div>
<svg class="ab" style="left:32.3px;top:253px" width="10.2" height="9" viewBox="0 0 10.2 9"><rect x="0.35" y="0.45" width="9.5" height="1.7" rx="0.85" fill="#7a7a7a" stroke="#333" stroke-width="0.7"/><rect x="7.7" y="0.9" width="1" height="0.8" fill="#c8c8c8"/><rect x="0.35" y="3.45" width="9.5" height="1.7" rx="0.85" fill="#7a7a7a" stroke="#333" stroke-width="0.7"/><rect x="7.7" y="3.9" width="1" height="0.8" fill="#c8c8c8"/><rect x="0.35" y="6.45" width="9.5" height="1.7" rx="0.85" fill="#7a7a7a" stroke="#333" stroke-width="0.7"/><rect x="7.7" y="6.9" width="1" height="0.8" fill="#c8c8c8"/></svg>
<svg class="ab" style="left:46.2px;top:250.73px" width="14.7" height="14.7" viewBox="-10 -10 20 20"><path d="M0.000 -4.500 L8.930 -4.500 A10 10 0 0 0 -8.362 -5.484 L-3.897 2.250 A4.5 4.5 0 0 1 0.000 -4.500 Z" fill="#ea4335"/><path d="M0.000 -4.500 L8.930 -4.500 A10 10 0 0 0 -8.362 -5.484 L-3.897 2.250 A4.5 4.5 0 0 1 0.000 -4.500 Z" fill="#fbbc05" transform="rotate(120)"/><path d="M0.000 -4.500 L8.930 -4.500 A10 10 0 0 0 -8.362 -5.484 L-3.897 2.250 A4.5 4.5 0 0 1 0.000 -4.500 Z" fill="#34a853" transform="rotate(240)"/><circle r="4.15" fill="#fff"/><circle r="3.4" fill="#4285f4"/></svg>
<svg class="ab" style="left:64.2px;top:253.13px" width="9.7" height="9.7" viewBox="-5 -5 10 10"><circle r="5" fill="#222"/><circle cx="0.1" cy="-2.2" r="0.75" fill="#fff"/><path d="M-1.1 -0.7 H0.75 V2.1 H1.4 V2.8 H-1.4 V2.1 H-0.65 V-0.1 H-1.1 Z" fill="#fff"/></svg>
<div class="t" style="left:76.95px;top:251.33px;font-size:11.5px;line-height:13.22px;color:#333;font-weight:bold;transform:scaleX(0.9272);transform-origin:0 0;">[B]</div>
<div class="t" style="left:97.15px;top:251.33px;font-size:11.5px;line-height:13.22px;color:#f8b800;font-weight:-webkit-text-stroke:0.15px #f8b800;;transform:scaleX(1.0403);transform-origin:0 0;">n/a - n/a - /siebel/scripts/siebel/ajaxreques<span style="color:#444;-webkit-text-stroke:0">...</span></div>
<div class="t" style="left:339.95px;top:251.33px;font-size:11.5px;line-height:13.22px;color:#f8b800;font-weight:-webkit-text-stroke:0.15px #f8b800;;transform:scaleX(0.9717);transform-origin:0 0;">HTTP:Request</div>
<div class="t" style="left:458.85px;top:251.33px;font-size:11.5px;line-height:13.22px;color:#444;font-weight:normal;transform:scaleX(1.0162);transform-origin:0 0;">07/29/2019 1:49:01 PM</div>
<div class="t" style="left:612.15px;top:251.33px;font-size:11.5px;line-height:13.22px;color:#444;font-weight:normal;transform:scaleX(1.0180);transform-origin:0 0;">2.814 s</div>
<div class="t" style="left:690.15px;top:251.33px;font-size:11.5px;line-height:13.22px;color:#444;font-weight:normal;transform:scaleX(0.9995);transform-origin:0 0;">1.593 s</div>
<div class="t" style="left:767.45px;top:251.33px;font-size:11.5px;line-height:13.22px;color:#444;font-weight:normal;transform:scaleX(1.0021);transform-origin:0 0;">1.221 s</div>
<div class="ab" style="left:875px;top:249.03px;width:73.7px;height:7.9px;background:#dcdcdc"></div>
<div class="ab" style="left:948.1px;top:249.03px;width:56.1px;height:7.9px;background:#08c04a"></div>
<div class="ab" style="left:3px;top:292.31px;width:1266px;height:1px;background:#ececec"></div>
<svg class="ab" style="left:32.3px;top:277px" width="10.2" height="9" viewBox="0 0 10.2 9"><rect x="0.35" y="0.45" width="9.5" height="1.7" rx="0.85" fill="#7a7a7a" stroke="#333" stroke-width="0.7"/><rect x="7.7" y="0.9" width="1" height="0.8" fill="#c8c8c8"/><rect x="0.35" y="3.45" width="9.5" height="1.7" rx="0.85" fill="#7a7a7a" stroke="#333" stroke-width="0.7"/><rect x="7.7" y="3.9" width="1" height="0.8" fill="#c8c8c8"/><rect x="0.35" y="6.45" width="9.5" height="1.7" rx="0.85" fill="#7a7a7a" stroke="#333" stroke-width="0.7"/><rect x="7.7" y="6.9" width="1" height="0.8" fill="#c8c8c8"/></svg>
<svg class="ab" style="left:46.2px;top:274.42px" width="14.7" height="14.7" viewBox="-10 -10 20 20"><path d="M0.000 -4.500 L8.930 -4.500 A10 10 0 0 0 -8.362 -5.484 L-3.897 2.250 A4.5 4.5 0 0 1 0.000 -4.500 Z" fill="#ea4335"/><path d="M0.000 -4.500 L8.930 -4.500 A10 10 0 0 0 -8.362 -5.484 L-3.897 2.250 A4.5 4.5 0 0 1 0.000 -4.500 Z" fill="#fbbc05" transform="rotate(120)"/><path d="M0.000 -4.500 L8.930 -4.500 A10 10 0 0 0 -8.362 -5.484 L-3.897 2.250 A4.5 4.5 0 0 1 0.000 -4.500 Z" fill="#34a853" transform="rotate(240)"/><circle r="4.15" fill="#fff"/><circle r="3.4" fill="#4285f4"/></svg>
<svg class="ab" style="left:64.2px;top:276.82px" width="9.7" height="9.7" viewBox="-5 -5 10 10"><circle r="5" fill="#222"/><circle cx="0.1" cy="-2.2" r="0.75" fill="#fff"/><path d="M-1.1 -0.7 H0.75 V2.1 H1.4 V2.8 H-1.4 V2.1 H-0.65 V-0.1 H-1.1 Z" fill="#fff"/></svg>
<div class="t" style="left:76.95px;top:275.02px;font-size:11.5px;line-height:13.22px;color:#333;font-weight:bold;transform:scaleX(0.9272);transform-origin:0 0;">[B]</div>
<div class="t" style="left:97.15px;top:275.02px;font-size:11.5px;line-height:13.22px;color:#f8b800;font-weight:-webkit-text-stroke:0.15px #f8b800;;transform:scaleX(1.0467);transform-origin:0 0;">n/a - n/a - /siebel/scripts/siebel/contentloa<span style="color:#444;-webkit-text-stroke:0">...</span></div>
<div class="t" style="left:339.95px;top:275.02px;font-size:11.5px;line-height:13.22px;color:#f8b800;font-weight:-webkit-text-stroke:0.15px #f8b800;;transform:scaleX(0.9717);transform-origin:0 0;">HTTP:Request</div>
<div class="t" style="left:458.85px;top:275.02px;font-size:11.5px;line-height:13.22px;color:#444;font-weight:normal;transform:scaleX(1.0162);transform-origin:0 0;">07/29/2019 1:49:01 PM</div>
<div class="t" style="left:612.15px;top:275.02px;font-size:11.5px;line-height:13.22px;color:#444;font-weight:normal;transform:scaleX(1.0180);transform-origin:0 0;">2.833 s</div>
<div class="t" style="left:690.15px;top:275.02px;font-size:11.5px;line-height:13.22px;color:#444;font-weight:normal;transform:scaleX(0.9995);transform-origin:0 0;">1.614 s</div>
<div class="t" style="left:767.45px;top:275.02px;font-size:11.5px;line-height:13.22px;color:#444;font-weight:normal;transform:scaleX(1.0021);transform-origin:0 0;">1.219 s</div>
<div class="ab" style="left:875px;top:272.72px;width:74.6px;height:7.9px;background:#dcdcdc"></div>
<div class="ab" style="left:949px;top:272.72px;width:56.1px;height:7.9px;background:#08c04a"></div>
<div class="ab" style="left:3px;top:316px;width:1266px;height:1px;background:#ececec"></div>
<svg class="ab" style="left:32.3px;top:301px" width="10.2" height="9" viewBox="0 0 10.2 9"><rect x="0.35" y="0.45" width="9.5" height="1.7" rx="0.85" fill="#7a7a7a" stroke="#333" stroke-width="0.7"/><rect x="7.7" y="0.9" width="1" height="0.8" fill="#c8c8c8"/><rect x="0.35" y="3.45" width="9.5" height="1.7" rx="0.85" fill="#7a7a7a" stroke="#333" stroke-width="0.7"/><rect x="7.7" y="3.9" width="1" height="0.8" fill="#c8c8c8"/><rect x="0.35" y="6.45" width="9.5" height="1.7" rx="0.85" fill="#7a7a7a" stroke="#333" stroke-width="0.7"/><rect x="7.7" y="6.9" width="1" height="0.8" fill="#c8c8c8"/></svg>
<svg class="ab" style="left:46.2px;top:298.11px" width="14.7" height="14.7" viewBox="-10 -10 20 20"><path d="M0.000 -4.500 L8.930 -4.500 A10 10 0 0 0 -8.362 -5.484 L-3.897 2.250 A4.5 4.5 0 0 1 0.000 -4.500 Z" fill="#ea4335"/><path d="M0.000 -4.500 L8.930 -4.500 A10 10 0 0 0 -8.362 -5.484 L-3.897 2.250 A4.5 4.5 0 0 1 0.000 -4.500 Z" fill="#fbbc05" transform="rotate(120)"/><path d="M0.000 -4.500 L8.930 -4.500 A10 10 0 0 0 -8.362 -5.484 L-3.897 2.250 A4.5 4.5 0 0 1 0.000 -4.500 Z" fill="#34a853" transform="rotate(240)"/><circle r="4.15" fill="#fff"/><circle r="3.4" fill="#4285f4"/></svg>
<svg class="ab" style="left:64.2px;top:300.51px" width="9.7" height="9.7" viewBox="-5 -5 10 10"><circle r="5" fill="#222"/><circle cx="0.1" cy="-2.2" r="0.75" fill="#fff"/><path d="M-1.1 -0.7 H0.75 V2.1 H1.4 V2.8 H-1.4 V2.1 H-0.65 V-0.1 H-1.1 Z" fill="#fff"/></svg>
<div class="t" style="left:76.95px;top:298.71px;font-size:11.5px;line-height:13.22px;color:#333;font-weight:bold;transform:scaleX(0.9272);transform-origin:0 0;">[B]</div>
<div class="t" style="left:97.15px;top:298.71px;font-size:11.5px;line-height:13.22px;color:#1f8c26;font-weight:-webkit-text-stroke:0.15px #1f8c26;;transform:scaleX(1.0393);transform-origin:0 0;">n/a - n/a - /siebel/scripts/siebel/siebelconst<span style="color:#444;-webkit-text-stroke:0">...</span></div>
<div class="t" style="left:339.95px;top:298.71px;font-size:11.5px;line-height:13.22px;color:#1f8c26;font-weight:-webkit-text-stroke:0.15px #1f8c26;;transform:scaleX(0.9717);transform-origin:0 0;">HTTP:Request</div>
<div class="t" style="left:458.85px;top:298.71px;font-size:11.5px;line-height:13.22px;color:#444;font-weight:normal;transform:scaleX(1.0162);transform-origin:0 0;">07/29/2019 1:49:01 PM</div>
<div class="t" style="left:612.15px;top:298.71px;font-size:11.5px;line-height:13.22px;color:#444;font-weight:normal;transform:scaleX(1.0180);transform-origin:0 0;">1.614 s</div>
<div class="t" style="left:690.15px;top:298.71px;font-size:11.5px;line-height:13.22px;color:#444;font-weight:normal;transform:scaleX(0.9995);transform-origin:0 0;">0.658 s</div>
<div class="t" style="left:767.45px;top:298.71px;font-size:11.5px;line-height:13.22px;color:#444;font-weight:normal;transform:scaleX(1.0021);transform-origin:0 0;">0.956 s</div>
<div class="ab" style="left:875px;top:296.41px;width:30.4px;height:7.9px;background:#dcdcdc"></div>
<div class="ab" style="left:904.8px;top:296.41px;width:25.8px;height:7.9px;background:#08c04a"></div>
<div class="ab" style="left:930px;top:296.41px;width:18.7px;height:7.9px;background:#0399f5"></div>
<div class="ab" style="left:3px;top:339.69px;width:1266px;height:1px;background:#ececec"></div>
<svg class="ab" style="left:32.3px;top:324px" width="10.2" height="9" viewBox="0 0 10.2 9"><rect x="0.35" y="0.45" width="9.5" height="1.7" rx="0.85" fill="#7a7a7a" stroke="#333" stroke-width="0.7"/><rect x="7.7" y="0.9" width="1" height="0.8" fill="#c8c8c8"/><rect x="0.35" y="3.45" width="9.5" height="1.7" rx="0.85" fill="#7a7a7a" stroke="#333" stroke-width="0.7"/><rect x="7.7" y="3.9" width="1" height="0.8" fill="#c8c8c8"/><rect x="0.35" y="6.45" width="9.5" height="1.7" rx="0.85" fill="#7a7a7a" stroke="#333" stroke-width="0.7"/><rect x="7.7" y="6.9" width="1" height="0.8" fill="#c8c8c8"/></svg>
<svg class="ab" style="left:46.2px;top:321.8px" width="14.7" height="14.7" viewBox="-10 -10 20 20"><path d="M0.000 -4.500 L8.930 -4.500 A10 10 0 0 0 -8.362 -5.484 L-3.897 2.250 A4.5 4.5 0 0 1 0.000 -4.500 Z" fill="#ea4335"/><path d="M0.000 -4.500 L8.930 -4.500 A10 10 0 0 0 -8.362 -5.484 L-3.897 2.250 A4.5 4.5 0 0 1 0.000 -4.500 Z" fill="#fbbc05" transform="rotate(120)"/><path d="M0.000 -4.500 L8.930 -4.500 A10 10 0 0 0 -8.362 -5.484 L-3.897 2.250 A4.5 4.5 0 0 1 0.000 -4.500 Z" fill="#34a853" transform="rotate(240)"/><circle r="4.15" fill="#fff"/><circle r="3.4" fill="#4285f4"/></svg>
<svg class="ab" style="left:64.2px;top:324.2px" width="9.7" height="9.7" viewBox="-5 -5 10 10"><circle r="5" fill="#222"/><circle cx="0.1" cy="-2.2" r="0.75" fill="#fff"/><path d="M-1.1 -0.7 H0.75 V2.1 H1.4 V2.8 H-1.4 V2.1 H-0.65 V-0.1 H-1.1 Z" fill="#fff"/></svg>
<div class="t" style="left:76.95px;top:322.4px;font-size:11.5px;line-height:13.22px;color:#333;font-weight:bold;transform:scaleX(0.9272);transform-origin:0 0;">[B]</div>
<div class="t" style="left:97.15px;top:322.4px;font-size:11.5px;line-height:13.22px;color:#1f8c26;font-weight:-webkit-text-stroke:0.15px #1f8c26;;transform:scaleX(1.0462);transform-origin:0 0;">n/a - n/a - /siebel/scripts/siebel/loadindicat<span style="color:#444;-webkit-text-stroke:0">...</span></div>
<div class="t" style="left:339.95px;top:322.4px;font-size:11.5px;line-height:13.22px;color:#1f8c26;font-weight:-webkit-text-stroke:0.15px #1f8c26;;transform:scaleX(0.9717);transform-origin:0 0;">HTTP:Request</div>
<div class="t" style="left:458.85px;top:322.4px;font-size:11.5px;line-height:13.22px;color:#444;font-weight:normal;transform:scaleX(1.0162);transform-origin:0 0;">07/29/2019 1:49:01 PM</div>
<div class="t" style="left:612.15px;top:322.4px;font-size:11.5px;line-height:13.22px;color:#444;font-weight:normal;transform:scaleX(1.0180);transform-origin:0 0;">1.594 s</div>
<div class="t" style="left:690.15px;top:322.4px;font-size:11.5px;line-height:13.22px;color:#444;font-weight:normal;transform:scaleX(0.9995);transform-origin:0 0;">0.640 s</div>
<div class="t" style="left:767.45px;top:322.4px;font-size:11.5px;line-height:13.22px;color:#444;font-weight:normal;transform:scaleX(1.0021);transform-origin:0 0;">0.954 s</div>
<div class="ab" style="left:875px;top:320.1px;width:29.6px;height:7.9px;background:#dcdcdc"></div>
<div class="ab" style="left:904px;top:320.1px;width:26.6px;height:7.9px;background:#08c04a"></div>
<div class="ab" style="left:930px;top:320.1px;width:17.8px;height:7.9px;background:#0399f5"></div>
<div class="ab" style="left:3px;top:363.38px;width:1266px;height:1px;background:#ececec"></div>
<svg class="ab" style="left:32.3px;top:348px" width="10.2" height="9" viewBox="0 0 10.2 9"><rect x="0.35" y="0.45" width="9.5" height="1.7" rx="0.85" fill="#7a7a7a" stroke="#333" stroke-width="0.7"/><rect x="7.7" y="0.9" width="1" height="0.8" fill="#c8c8c8"/><rect x="0.35" y="3.45" width="9.5" height="1.7" rx="0.85" fill="#7a7a7a" stroke="#333" stroke-width="0.7"/><rect x="7.7" y="3.9" width="1" height="0.8" fill="#c8c8c8"/><rect x="0.35" y="6.45" width="9.5" height="1.7" rx="0.85" fill="#7a7a7a" stroke="#333" stroke-width="0.7"/><rect x="7.7" y="6.9" width="1" height="0.8" fill="#c8c8c8"/></svg>
<svg class="ab" style="left:46.2px;top:345.49px" width="14.7" height="14.7" viewBox="-10 -10 20 20"><path d="M0.000 -4.500 L8.930 -4.500 A10 10 0 0 0 -8.362 -5.484 L-3.897 2.250 A4.5 4.5 0 0 1 0.000 -4.500 Z" fill="#ea4335"/><path d="M0.000 -4.500 L8.930 -4.500 A10 10 0 0 0 -8.362 -5.484 L-3.897 2.250 A4.5 4.5 0 0 1 0.000 -4.500 Z" fill="#fbbc05" transform="rotate(120)"/><path d="M0.000 -4.500 L8.930 -4.500 A10 10 0 0 0 -8.362 -5.484 L-3.897 2.250 A4.5 4.5 0 0 1 0.000 -4.500 Z" fill="#34a853" transform="rotate(240)"/><circle r="4.15" fill="#fff"/><circle r="3.4" fill="#4285f4"/></svg>
<svg class="ab" style="left:64.2px;top:347.89px" width="9.7" height="9.7" viewBox="-5 -5 10 10"><circle r="5" fill="#222"/><circle cx="0.1" cy="-2.2" r="0.75" fill="#fff"/><path d="M-1.1 -0.7 H0.75 V2.1 H1.4 V2.8 H-1.4 V2.1 H-0.65 V-0.1 H-1.1 Z" fill="#fff"/></svg>
<div class="t" style="left:76.95px;top:346.09px;font-size:11.5px;line-height:13.22px;color:#333;font-weight:bold;transform:scaleX(0.9272);transform-origin:0 0;">[B]</div>
<div class="t" style="left:97.15px;top:346.09px;font-size:11.5px;line-height:13.22px;color:#1f8c26;font-weight:-webkit-text-stroke:0.15px #1f8c26;;transform:scaleX(1.0523);transform-origin:0 0;">n/a - n/a - /siebel/scripts/3rdParty/ckeditor<span style="color:#444;-webkit-text-stroke:0">...</span></div>
<div class="t" style="left:339.95px;top:346.09px;font-size:11.5px;line-height:13.22px;color:#1f8c26;font-weight:-webkit-text-stroke:0.15px #1f8c26;;transform:scaleX(0.9717);transform-origin:0 0;">HTTP:Request</div>
<div class="t" style="left:458.85px;top:346.09px;font-size:11.5px;line-height:13.22px;color:#444;font-weight:normal;transform:scaleX(1.0162);transform-origin:0 0;">07/29/2019 1:49:05 PM</div>
<div class="t" style="left:612.15px;top:346.09px;font-size:11.5px;line-height:13.22px;color:#444;font-weight:normal;transform:scaleX(1.0180);transform-origin:0 0;">1.506 s</div>
<div class="t" style="left:690.15px;top:346.09px;font-size:11.5px;line-height:13.22px;color:#444;font-weight:normal;transform:scaleX(0.9995);transform-origin:0 0;">0.561 s</div>
<div class="t" style="left:767.45px;top:346.09px;font-size:11.5px;line-height:13.22px;color:#444;font-weight:normal;transform:scaleX(1.0021);transform-origin:0 0;">0.945 s</div>
<div class="ab" style="left:1057.9px;top:343.79px;width:26.1px;height:7.9px;background:#dcdcdc"></div>
<div class="ab" style="left:1083.4px;top:343.79px;width:2px;height:7.9px;background:#08c04a"></div>
<div class="ab" style="left:1084.8px;top:343.79px;width:42.2px;height:7.9px;background:#0399f5"></div>
<div class="ab" style="left:3px;top:387.07px;width:1266px;height:1px;background:#ececec"></div>
<svg class="ab" style="left:32.3px;top:372px" width="10.2" height="9" viewBox="0 0 10.2 9"><rect x="0.35" y="0.45" width="9.5" height="1.7" rx="0.85" fill="#7a7a7a" stroke="#333" stroke-width="0.7"/><rect x="7.7" y="0.9" width="1" height="0.8" fill="#c8c8c8"/><rect x="0.35" y="3.45" width="9.5" height="1.7" rx="0.85" fill="#7a7a7a" stroke="#333" stroke-width="0.7"/><rect x="7.7" y="3.9" width="1" height="0.8" fill="#c8c8c8"/><rect x="0.35" y="6.45" width="9.5" height="1.7" rx="0.85" fill="#7a7a7a" stroke="#333" stroke-width="0.7"/><rect x="7.7" y="6.9" width="1" height="0.8" fill="#c8c8c8"/></svg>
<svg class="ab" style="left:46.2px;top:369.18px" width="14.7" height="14.7" viewBox="-10 -10 20 20"><path d="M0.000 -4.500 L8.930 -4.500 A10 10 0 0 0 -8.362 -5.484 L-3.897 2.250 A4.5 4.5 0 0 1 0.000 -4.500 Z" fill="#ea4335"/><path d="M0.000 -4.500 L8.930 -4.500 A10 10 0 0 0 -8.362 -5.484 L-3.897 2.250 A4.5 4.5 0 0 1 0.000 -4.500 Z" fill="#fbbc05" transform="rotate(120)"/><path d="M0.000 -4.500 L8.930 -4.500 A10 10 0 0 0 -8.362 -5.484 L-3.897 2.250 A4.5 4.5 0 0 1 0.000 -4.500 Z" fill="#34a853" transform="rotate(240)"/><circle r="4.15" fill="#fff"/><circle r="3.4" fill="#4285f4"/></svg>
<svg class="ab" style="left:64.2px;top:371.58px" width="9.7" height="9.7" viewBox="-5 -5 10 10"><circle r="5" fill="#222"/><circle cx="0.1" cy="-2.2" r="0.75" fill="#fff"/><path d="M-1.1 -0.7 H0.75 V2.1 H1.4 V2.8 H-1.4 V2.1 H-0.65 V-0.1 H-1.1 Z" fill="#fff"/></svg>
<div class="t" style="left:76.95px;top:369.78px;font-size:11.5px;line-height:13.22px;color:#333;font-weight:bold;transform:scaleX(0.9272);transform-origin:0 0;">[B]</div>
<div class="t" style="left:97.15px;top:369.78px;font-size:11.5px;line-height:13.22px;color:#f8b800;font-weight:-webkit-text-stroke:0.15px #f8b800;;transform:scaleX(1.0344);transform-origin:0 0;">n/a - n/a - /siebel/scripts/core-shadow.js - <span style="color:#444;-webkit-text-stroke:0">...</span></div>
<div class="t" style="left:339.95px;top:369.78px;font-size:11.5px;line-height:13.22px;color:#f8b800;font-weight:-webkit-text-stroke:0.15px #f8b800;;transform:scaleX(0.9717);transform-origin:0 0;">HTTP:Request</div>
<div class="t" style="left:458.85px;top:369.78px;font-size:11.5px;line-height:13.22px;color:#444;font-weight:normal;transform:scaleX(1.0162);transform-origin:0 0;">07/29/2019 1:49:01 PM</div>
<div class="t" style="left:612.15px;top:369.78px;font-size:11.5px;line-height:13.22px;color:#444;font-weight:normal;transform:scaleX(1.0180);transform-origin:0 0;">3.672 s</div>
<div class="t" style="left:690.15px;top:369.78px;font-size:11.5px;line-height:13.22px;color:#444;font-weight:normal;transform:scaleX(0.9995);transform-origin:0 0;">2.833 s</div>
<div class="t" style="left:767.45px;top:369.78px;font-size:11.5px;line-height:13.22px;color:#444;font-weight:normal;transform:scaleX(1.0021);transform-origin:0 0;">0.839 s</div>
<div class="ab" style="left:875px;top:367.48px;width:129.7px;height:7.9px;background:#dcdcdc"></div>
<div class="ab" style="left:1004.1px;top:367.48px;width:10.8px;height:7.9px;background:#08c04a"></div>
<div class="ab" style="left:1014.3px;top:367.48px;width:29.2px;height:7.9px;background:#0399f5"></div>
<div class="ab" style="left:3px;top:410.76px;width:1266px;height:1px;background:#ececec"></div>
<svg class="ab" style="left:32.3px;top:396px" width="10.2" height="9" viewBox="0 0 10.2 9"><rect x="0.35" y="0.45" width="9.5" height="1.7" rx="0.85" fill="#7a7a7a" stroke="#333" stroke-width="0.7"/><rect x="7.7" y="0.9" width="1" height="0.8" fill="#c8c8c8"/><rect x="0.35" y="3.45" width="9.5" height="1.7" rx="0.85" fill="#7a7a7a" stroke="#333" stroke-width="0.7"/><rect x="7.7" y="3.9" width="1" height="0.8" fill="#c8c8c8"/><rect x="0.35" y="6.45" width="9.5" height="1.7" rx="0.85" fill="#7a7a7a" stroke="#333" stroke-width="0.7"/><rect x="7.7" y="6.9" width="1" height="0.8" fill="#c8c8c8"/></svg>
<svg class="ab" style="left:46.2px;top:392.87px" width="14.7" height="14.7" viewBox="-10 -10 20 20"><path d="M0.000 -4.500 L8.930 -4.500 A10 10 0 0 0 -8.362 -5.484 L-3.897 2.250 A4.5 4.5 0 0 1 0.000 -4.500 Z" fill="#ea4335"/><path d="M0.000 -4.500 L8.930 -4.500 A10 10 0 0 0 -8.362 -5.484 L-3.897 2.250 A4.5 4.5 0 0 1 0.000 -4.500 Z" fill="#fbbc05" transform="rotate(120)"/><path d="M0.000 -4.500 L8.930 -4.500 A10 10 0 0 0 -8.362 -5.484 L-3.897 2.250 A4.5 4.5 0 0 1 0.000 -4.500 Z" fill="#34a853" transform="rotate(240)"/><circle r="4.15" fill="#fff"/><circle r="3.4" fill="#4285f4"/></svg>
<svg class="ab" style="left:64.2px;top:395.27px" width="9.7" height="9.7" viewBox="-5 -5 10 10"><circle r="5" fill="#222"/><circle cx="0.1" cy="-2.2" r="0.75" fill="#fff"/><path d="M-1.1 -0.7 H0.75 V2.1 H1.4 V2.8 H-1.4 V2.1 H-0.65 V-0.1 H-1.1 Z" fill="#fff"/></svg>
<div class="t" style="left:76.95px;top:393.47px;font-size:11.5px;line-height:13.22px;color:#333;font-weight:bold;transform:scaleX(0.9272);transform-origin:0 0;">[B]</div>
<div class="t" style="left:97.15px;top:393.47px;font-size:11.5px;line-height:13.22px;color:#1f8c26;font-weight:-webkit-text-stroke:0.15px #1f8c26;;transform:scaleX(1.0434);transform-origin:0 0;">n/a - n/a - /siebel/scripts/siebel/pwinfra.js -<span style="color:#444;-webkit-text-stroke:0">...</span></div>
<div class="t" style="left:339.95px;top:393.47px;font-size:11.5px;line-height:13.22px;color:#1f8c26;font-weight:-webkit-text-stroke:0.15px #1f8c26;;transform:scaleX(0.9717);transform-origin:0 0;">HTTP:Request</div>
<div class="t" style="left:458.85px;top:393.47px;font-size:11.5px;line-height:13.22px;color:#444;font-weight:normal;transform:scaleX(1.0162);transform-origin:0 0;">07/29/2019 1:49:05 PM</div>
<div class="t" style="left:612.15px;top:393.47px;font-size:11.5px;line-height:13.22px;color:#444;font-weight:normal;transform:scaleX(1.0180);transform-origin:0 0;">0.940 s</div>
<div class="t" style="left:690.15px;top:393.47px;font-size:11.5px;line-height:13.22px;color:#444;font-weight:normal;transform:scaleX(0.9995);transform-origin:0 0;">0.206 s</div>
<div class="t" style="left:767.45px;top:393.47px;font-size:11.5px;line-height:13.22px;color:#444;font-weight:normal;transform:scaleX(1.0021);transform-origin:0 0;">0.734 s</div>
<div class="ab" style="left:1057.8px;top:391.17px;width:10px;height:7.9px;background:#dcdcdc"></div>
<div class="ab" style="left:1067.2px;top:391.17px;width:4.1px;height:7.9px;background:#08c04a"></div>
<div class="ab" style="left:1070.7px;top:391.17px;width:30.2px;height:7.9px;background:#0399f5"></div>
<div class="ab" style="left:3px;top:434.45px;width:1266px;height:1px;background:#ececec"></div>
<svg class="ab" style="left:32.3px;top:419px" width="10.2" height="9" viewBox="0 0 10.2 9"><rect x="0.35" y="0.45" width="9.5" height="1.7" rx="0.85" fill="#7a7a7a" stroke="#333" stroke-width="0.7"/><rect x="7.7" y="0.9" width="1" height="0.8" fill="#c8c8c8"/><rect x="0.35" y="3.45" width="9.5" height="1.7" rx="0.85" fill="#7a7a7a" stroke="#333" stroke-width="0.7"/><rect x="7.7" y="3.9" width="1" height="0.8" fill="#c8c8c8"/><rect x="0.35" y="6.45" width="9.5" height="1.7" rx="0.85" fill="#7a7a7a" stroke="#333" stroke-width="0.7"/><rect x="7.7" y="6.9" width="1" height="0.8" fill="#c8c8c8"/></svg>
<svg class="ab" style="left:46.2px;top:416.56px" width="14.7" height="14.7" viewBox="-10 -10 20 20"><path d="M0.000 -4.500 L8.930 -4.500 A10 10 0 0 0 -8.362 -5.484 L-3.897 2.250 A4.5 4.5 0 0 1 0.000 -4.500 Z" fill="#ea4335"/><path d="M0.000 -4.500 L8.930 -4.500 A10 10 0 0 0 -8.362 -5.484 L-3.897 2.250 A4.5 4.5 0 0 1 0.000 -4.500 Z" fill="#fbbc05" transform="rotate(120)"/><path d="M0.000 -4.500 L8.930 -4.500 A10 10 0 0 0 -8.362 -5.484 L-3.897 2.250 A4.5 4.5 0 0 1 0.000 -4.500 Z" fill="#34a853" transform="rotate(240)"/><circle r="4.15" fill="#fff"/><circle r="3.4" fill="#4285f4"/></svg>
<svg class="ab" style="left:64.2px;top:418.96px" width="9.7" height="9.7" viewBox="-5 -5 10 10"><circle r="5" fill="#222"/><circle cx="0.1" cy="-2.2" r="0.75" fill="#fff"/><path d="M-1.1 -0.7 H0.75 V2.1 H1.4 V2.8 H-1.4 V2.1 H-0.65 V-0.1 H-1.1 Z" fill="#fff"/></svg>
<div class="t" style="left:76.95px;top:417.16px;font-size:11.5px;line-height:13.22px;color:#333;font-weight:bold;transform:scaleX(0.9272);transform-origin:0 0;">[B]</div>
<div class="t" style="left:97.15px;top:417.16px;font-size:11.5px;line-height:13.22px;color:#1f8c26;font-weight:-webkit-text-stroke:0.15px #1f8c26;;transform:scaleX(1.0513);transform-origin:0 0;">n/a - n/a - /siebel/scripts/siebel/jqgridrend<span style="color:#444;-webkit-text-stroke:0">...</span></div>
<div class="t" style="left:339.95px;top:417.16px;font-size:11.5px;line-height:13.22px;color:#1f8c26;font-weight:-webkit-text-stroke:0.15px #1f8c26;;transform:scaleX(0.9717);transform-origin:0 0;">HTTP:Request</div>
<div class="t" style="left:458.85px;top:417.16px;font-size:11.5px;line-height:13.22px;color:#444;font-weight:normal;transform:scaleX(1.0162);transform-origin:0 0;">07/29/2019 1:49:05 PM</div>
<div class="t" style="left:612.15px;top:417.16px;font-size:11.5px;line-height:13.22px;color:#444;font-weight:normal;transform:scaleX(1.0180);transform-origin:0 0;">0.577 s</div>
<div class="t" style="left:690.15px;top:417.16px;font-size:11.5px;line-height:13.22px;color:#444;font-weight:normal;transform:scaleX(0.9995);transform-origin:0 0;">0.002 s</div>
<div class="t" style="left:767.45px;top:417.16px;font-size:11.5px;line-height:13.22px;color:#444;font-weight:normal;transform:scaleX(1.0021);transform-origin:0 0;">0.575 s</div>
<div class="ab" style="left:1057.8px;top:414.86px;width:2.8px;height:7.9px;background:#08c04a"></div>
<div class="ab" style="left:1060px;top:414.86px;width:24.9px;height:7.9px;background:#0399f5"></div>
<div class="ab" style="left:3px;top:458.14px;width:1266px;height:1px;background:#ececec"></div>
<svg class="ab" style="left:32.3px;top:443px" width="10.2" height="9" viewBox="0 0 10.2 9"><rect x="0.35" y="0.45" width="9.5" height="1.7" rx="0.85" fill="#7a7a7a" stroke="#333" stroke-width="0.7"/><rect x="7.7" y="0.9" width="1" height="0.8" fill="#c8c8c8"/><rect x="0.35" y="3.45" width="9.5" height="1.7" rx="0.85" fill="#7a7a7a" stroke="#333" stroke-width="0.7"/><rect x="7.7" y="3.9" width="1" height="0.8" fill="#c8c8c8"/><rect x="0.35" y="6.45" width="9.5" height="1.7" rx="0.85" fill="#7a7a7a" stroke="#333" stroke-width="0.7"/><rect x="7.7" y="6.9" width="1" height="0.8" fill="#c8c8c8"/></svg>
<svg class="ab" style="left:46.2px;top:440.25px" width="14.7" height="14.7" viewBox="-10 -10 20 20"><path d="M0.000 -4.500 L8.930 -4.500 A10 10 0 0 0 -8.362 -5.484 L-3.897 2.250 A4.5 4.5 0 0 1 0.000 -4.500 Z" fill="#ea4335"/><path d="M0.000 -4.500 L8.930 -4.500 A10 10 0 0 0 -8.362 -5.484 L-3.897 2.250 A4.5 4.5 0 0 1 0.000 -4.500 Z" fill="#fbbc05" transform="rotate(120)"/><path d="M0.000 -4.500 L8.930 -4.500 A10 10 0 0 0 -8.362 -5.484 L-3.897 2.250 A4.5 4.5 0 0 1 0.000 -4.500 Z" fill="#34a853" transform="rotate(240)"/><circle r="4.15" fill="#fff"/><circle r="3.4" fill="#4285f4"/></svg>
<svg class="ab" style="left:64.2px;top:442.65px" width="9.7" height="9.7" viewBox="-5 -5 10 10"><circle r="5" fill="#222"/><circle cx="0.1" cy="-2.2" r="0.75" fill="#fff"/><path d="M-1.1 -0.7 H0.75 V2.1 H1.4 V2.8 H-1.4 V2.1 H-0.65 V-0.1 H-1.1 Z" fill="#fff"/></svg>
<div class="t" style="left:76.95px;top:440.85px;font-size:11.5px;line-height:13.22px;color:#333;font-weight:bold;transform:scaleX(0.9272);transform-origin:0 0;">[B]</div>
<div class="t" style="left:97.15px;top:440.85px;font-size:11.5px;line-height:13.22px;color:#1f8c26;font-weight:-webkit-text-stroke:0.15px #1f8c26;;transform:scaleX(1.0469);transform-origin:0 0;">n/a - n/a - /siebel/scripts/3rdParty/fullcalen<span style="color:#444;-webkit-text-stroke:0">...</span></div>
<div class="t" style="left:339.95px;top:440.85px;font-size:11.5px;line-height:13.22px;color:#1f8c26;font-weight:-webkit-text-stroke:0.15px #1f8c26;;transform:scaleX(0.9717);transform-origin:0 0;">HTTP:Request</div>
<div class="t" style="left:458.85px;top:440.85px;font-size:11.5px;line-height:13.22px;color:#444;font-weight:normal;transform:scaleX(1.0162);transform-origin:0 0;">07/29/2019 1:49:09 PM</div>
<div class="t" style="left:612.15px;top:440.85px;font-size:11.5px;line-height:13.22px;color:#444;font-weight:normal;transform:scaleX(1.0180);transform-origin:0 0;">0.571 s</div>
<div class="t" style="left:690.15px;top:440.85px;font-size:11.5px;line-height:13.22px;color:#444;font-weight:normal;transform:scaleX(0.9995);transform-origin:0 0;">0.004 s</div>
<div class="t" style="left:767.45px;top:440.85px;font-size:11.5px;line-height:13.22px;color:#444;font-weight:normal;transform:scaleX(1.0021);transform-origin:0 0;">0.567 s</div>
<div class="ab" style="left:1240.9px;top:438.55px;width:3.3px;height:7.9px;background:#08c04a"></div>
<div class="ab" style="left:1243.6px;top:438.55px;width:21.8px;height:7.9px;background:#0399f5"></div>
<div class="ab" style="left:3px;top:481.83px;width:1266px;height:1px;background:#ececec"></div>
<svg class="ab" style="left:32.3px;top:467px" width="10.2" height="9" viewBox="0 0 10.2 9"><rect x="0.35" y="0.45" width="9.5" height="1.7" rx="0.85" fill="#7a7a7a" stroke="#333" stroke-width="0.7"/><rect x="7.7" y="0.9" width="1" height="0.8" fill="#c8c8c8"/><rect x="0.35" y="3.45" width="9.5" height="1.7" rx="0.85" fill="#7a7a7a" stroke="#333" stroke-width="0.7"/><rect x="7.7" y="3.9" width="1" height="0.8" fill="#c8c8c8"/><rect x="0.35" y="6.45" width="9.5" height="1.7" rx="0.85" fill="#7a7a7a" stroke="#333" stroke-width="0.7"/><rect x="7.7" y="6.9" width="1" height="0.8" fill="#c8c8c8"/></svg>
<svg class="ab" style="left:46.2px;top:463.94px" width="14.7" height="14.7" viewBox="-10 -10 20 20"><path d="M0.000 -4.500 L8.930 -4.500 A10 10 0 0 0 -8.362 -5.484 L-3.897 2.250 A4.5 4.5 0 0 1 0.000 -4.500 Z" fill="#ea4335"/><path d="M0.000 -4.500 L8.930 -4.500 A10 10 0 0 0 -8.362 -5.484 L-3.897 2.250 A4.5 4.5 0 0 1 0.000 -4.500 Z" fill="#fbbc05" transform="rotate(120)"/><path d="M0.000 -4.500 L8.930 -4.500 A10 10 0 0 0 -8.362 -5.484 L-3.897 2.250 A4.5 4.5 0 0 1 0.000 -4.500 Z" fill="#34a853" transform="rotate(240)"/><circle r="4.15" fill="#fff"/><circle r="3.4" fill="#4285f4"/></svg>
<svg class="ab" style="left:64.2px;top:466.34px" width="9.7" height="9.7" viewBox="-5 -5 10 10"><circle r="5" fill="#222"/><circle cx="0.1" cy="-2.2" r="0.75" fill="#fff"/><path d="M-1.1 -0.7 H0.75 V2.1 H1.4 V2.8 H-1.4 V2.1 H-0.65 V-0.1 H-1.1 Z" fill="#fff"/></svg>
<div class="t" style="left:76.95px;top:464.54px;font-size:11.5px;line-height:13.22px;color:#333;font-weight:bold;transform:scaleX(0.9272);transform-origin:0 0;">[B]</div>
<div class="t" style="left:97.15px;top:464.54px;font-size:11.5px;line-height:13.22px;color:#1f8c26;font-weight:-webkit-text-stroke:0.15px #1f8c26;;transform:scaleX(1.0491);transform-origin:0 0;">n/a - n/a - /siebel/scripts/3rdParty/jqGrid/c<span style="color:#444;-webkit-text-stroke:0">...</span></div>
<div class="t" style="left:339.95px;top:464.54px;font-size:11.5px;line-height:13.22px;color:#1f8c26;font-weight:-webkit-text-stroke:0.15px #1f8c26;;transform:scaleX(0.9717);transform-origin:0 0;">HTTP:Request</div>
<div class="t" style="left:458.85px;top:464.54px;font-size:11.5px;line-height:13.22px;color:#444;font-weight:normal;transform:scaleX(1.0162);transform-origin:0 0;">07/29/2019 1:49:06 PM</div>
<div class="t" style="left:612.15px;top:464.54px;font-size:11.5px;line-height:13.22px;color:#444;font-weight:normal;transform:scaleX(1.0180);transform-origin:0 0;">0.881 s</div>
<div class="t" style="left:690.15px;top:464.54px;font-size:11.5px;line-height:13.22px;color:#444;font-weight:normal;transform:scaleX(0.9995);transform-origin:0 0;">0.323 s</div>
<div class="t" style="left:767.45px;top:464.54px;font-size:11.5px;line-height:13.22px;color:#444;font-weight:normal;transform:scaleX(1.0021);transform-origin:0 0;">0.558 s</div>
<div class="ab" style="left:1103.8px;top:462.24px;width:15.2px;height:7.9px;background:#dcdcdc"></div>
<div class="ab" style="left:1118.4px;top:462.24px;width:3.3px;height:7.9px;background:#08c04a"></div>
<div class="ab" style="left:1121.1px;top:462.24px;width:22.8px;height:7.9px;background:#0399f5"></div>
<div class="ab" style="left:3px;top:505.52px;width:1266px;height:1px;background:#ececec"></div>
<svg class="ab" style="left:32.3px;top:490px" width="10.2" height="9" viewBox="0 0 10.2 9"><rect x="0.35" y="0.45" width="9.5" height="1.7" rx="0.85" fill="#7a7a7a" stroke="#333" stroke-width="0.7"/><rect x="7.7" y="0.9" width="1" height="0.8" fill="#c8c8c8"/><rect x="0.35" y="3.45" width="9.5" height="1.7" rx="0.85" fill="#7a7a7a" stroke="#333" stroke-width="0.7"/><rect x="7.7" y="3.9" width="1" height="0.8" fill="#c8c8c8"/><rect x="0.35" y="6.45" width="9.5" height="1.7" rx="0.85" fill="#7a7a7a" stroke="#333" stroke-width="0.7"/><rect x="7.7" y="6.9" width="1" height="0.8" fill="#c8c8c8"/></svg>
<svg class="ab" style="left:46.2px;top:487.63px" width="14.7" height="14.7" viewBox="-10 -10 20 20"><path d="M0.000 -4.500 L8.930 -4.500 A10 10 0 0 0 -8.362 -5.484 L-3.897 2.250 A4.5 4.5 0 0 1 0.000 -4.500 Z" fill="#ea4335"/><path d="M0.000 -4.500 L8.930 -4.500 A10 10 0 0 0 -8.362 -5.484 L-3.897 2.250 A4.5 4.5 0 0 1 0.000 -4.500 Z" fill="#fbbc05" transform="rotate(120)"/><path d="M0.000 -4.500 L8.930 -4.500 A10 10 0 0 0 -8.362 -5.484 L-3.897 2.250 A4.5 4.5 0 0 1 0.000 -4.500 Z" fill="#34a853" transform="rotate(240)"/><circle r="4.15" fill="#fff"/><circle r="3.4" fill="#4285f4"/></svg>
<svg class="ab" style="left:64.2px;top:490.03px" width="9.7" height="9.7" viewBox="-5 -5 10 10"><circle r="5" fill="#222"/><circle cx="0.1" cy="-2.2" r="0.75" fill="#fff"/><path d="M-1.1 -0.7 H0.75 V2.1 H1.4 V2.8 H-1.4 V2.1 H-0.65 V-0.1 H-1.1 Z" fill="#fff"/></svg>
<div class="t" style="left:76.95px;top:488.23px;font-size:11.5px;line-height:13.22px;color:#333;font-weight:bold;transform:scaleX(0.9272);transform-origin:0 0;">[B]</div>
<div class="t" style="left:97.15px;top:488.23px;font-size:11.5px;line-height:13.22px;color:#1f8c26;font-weight:-webkit-text-stroke:0.15px #1f8c26;;transform:scaleX(1.0259);transform-origin:0 0;">n/a - n/a - /siebel/scripts/siebel/core-cc.js - <span style="color:#444;-webkit-text-stroke:0">...</span></div>
<div class="t" style="left:339.95px;top:488.23px;font-size:11.5px;line-height:13.22px;color:#1f8c26;font-weight:-webkit-text-stroke:0.15px #1f8c26;;transform:scaleX(0.9717);transform-origin:0 0;">HTTP:Request</div>
<div class="t" style="left:458.85px;top:488.23px;font-size:11.5px;line-height:13.22px;color:#444;font-weight:normal;transform:scaleX(1.0162);transform-origin:0 0;">07/29/2019 1:49:05 PM</div>
<div class="t" style="left:612.15px;top:488.23px;font-size:11.5px;line-height:13.22px;color:#444;font-weight:normal;transform:scaleX(1.0180);transform-origin:0 0;">0.809 s</div>
<div class="t" style="left:690.15px;top:488.23px;font-size:11.5px;line-height:13.22px;color:#444;font-weight:normal;transform:scaleX(0.9995);transform-origin:0 0;">0.288 s</div>
<div class="t" style="left:767.45px;top:488.23px;font-size:11.5px;line-height:13.22px;color:#444;font-weight:normal;transform:scaleX(1.0021);transform-origin:0 0;">0.521 s</div>
<div class="ab" style="left:1058px;top:485.93px;width:13.8px;height:7.9px;background:#dcdcdc"></div>
<div class="ab" style="left:1071.2px;top:485.93px;width:2.7px;height:7.9px;background:#08c04a"></div>
<div class="ab" style="left:1073.3px;top:485.93px;width:22px;height:7.9px;background:#0399f5"></div>
<div class="ab" style="left:3px;top:529.21px;width:1266px;height:1px;background:#ececec"></div>
<svg class="ab" style="left:32.3px;top:514px" width="10.2" height="9" viewBox="0 0 10.2 9"><rect x="0.35" y="0.45" width="9.5" height="1.7" rx="0.85" fill="#7a7a7a" stroke="#333" stroke-width="0.7"/><rect x="7.7" y="0.9" width="1" height="0.8" fill="#c8c8c8"/><rect x="0.35" y="3.45" width="9.5" height="1.7" rx="0.85" fill="#7a7a7a" stroke="#333" stroke-width="0.7"/><rect x="7.7" y="3.9" width="1" height="0.8" fill="#c8c8c8"/><rect x="0.35" y="6.45" width="9.5" height="1.7" rx="0.85" fill="#7a7a7a" stroke="#333" stroke-width="0.7"/><rect x="7.7" y="6.9" width="1" height="0.8" fill="#c8c8c8"/></svg>
<svg class="ab" style="left:46.2px;top:511.32px" width="14.7" height="14.7" viewBox="-10 -10 20 20"><path d="M0.000 -4.500 L8.930 -4.500 A10 10 0 0 0 -8.362 -5.484 L-3.897 2.250 A4.5 4.5 0 0 1 0.000 -4.500 Z" fill="#ea4335"/><path d="M0.000 -4.500 L8.930 -4.500 A10 10 0 0 0 -8.362 -5.484 L-3.897 2.250 A4.5 4.5 0 0 1 0.000 -4.500 Z" fill="#fbbc05" transform="rotate(120)"/><path d="M0.000 -4.500 L8.930 -4.500 A10 10 0 0 0 -8.362 -5.484 L-3.897 2.250 A4.5 4.5 0 0 1 0.000 -4.500 Z" fill="#34a853" transform="rotate(240)"/><circle r="4.15" fill="#fff"/><circle r="3.4" fill="#4285f4"/></svg>
<svg class="ab" style="left:64.2px;top:513.72px" width="9.7" height="9.7" viewBox="-5 -5 10 10"><circle r="5" fill="#222"/><circle cx="0.1" cy="-2.2" r="0.75" fill="#fff"/><path d="M-1.1 -0.7 H0.75 V2.1 H1.4 V2.8 H-1.4 V2.1 H-0.65 V-0.1 H-1.1 Z" fill="#fff"/></svg>
<div class="t" style="left:76.95px;top:511.92px;font-size:11.5px;line-height:13.22px;color:#333;font-weight:bold;transform:scaleX(0.9272);transform-origin:0 0;">[B]</div>
<div class="t" style="left:97.15px;top:511.92px;font-size:11.5px;line-height:13.22px;color:#1f8c26;font-weight:-webkit-text-stroke:0.15px #1f8c26;;transform:scaleX(1.0452);transform-origin:0 0;">n/a - n/a - /siebel/fonts/Roboto-Light-webf<span style="color:#444;-webkit-text-stroke:0">...</span></div>
<div class="t" style="left:339.95px;top:511.92px;font-size:11.5px;line-height:13.22px;color:#1f8c26;font-weight:-webkit-text-stroke:0.15px #1f8c26;;transform:scaleX(0.9717);transform-origin:0 0;">HTTP:Request</div>
<div class="t" style="left:458.85px;top:511.92px;font-size:11.5px;line-height:13.22px;color:#444;font-weight:normal;transform:scaleX(1.0162);transform-origin:0 0;">07/29/2019 1:49:05 PM</div>
<div class="t" style="left:612.15px;top:511.92px;font-size:11.5px;line-height:13.22px;color:#444;font-weight:normal;transform:scaleX(1.0180);transform-origin:0 0;">0.578 s</div>
<div class="t" style="left:690.15px;top:511.92px;font-size:11.5px;line-height:13.22px;color:#444;font-weight:normal;transform:scaleX(0.9995);transform-origin:0 0;">0.075 s</div>
<div class="t" style="left:767.45px;top:511.92px;font-size:11.5px;line-height:13.22px;color:#444;font-weight:normal;transform:scaleX(1.0021);transform-origin:0 0;">0.503 s</div>
<div class="ab" style="left:1058px;top:509.62px;width:3.9px;height:7.9px;background:#dcdcdc"></div>
<div class="ab" style="left:1061.3px;top:509.62px;width:3.1px;height:7.9px;background:#08c04a"></div>
<div class="ab" style="left:1063.8px;top:509.62px;width:20.4px;height:7.9px;background:#0399f5"></div>
<div class="ab" style="left:3px;top:552.9px;width:1266px;height:1px;background:#ececec"></div>
<svg class="ab" style="left:32.3px;top:538px" width="10.2" height="9" viewBox="0 0 10.2 9"><rect x="0.35" y="0.45" width="9.5" height="1.7" rx="0.85" fill="#7a7a7a" stroke="#333" stroke-width="0.7"/><rect x="7.7" y="0.9" width="1" height="0.8" fill="#c8c8c8"/><rect x="0.35" y="3.45" width="9.5" height="1.7" rx="0.85" fill="#7a7a7a" stroke="#333" stroke-width="0.7"/><rect x="7.7" y="3.9" width="1" height="0.8" fill="#c8c8c8"/><rect x="0.35" y="6.45" width="9.5" height="1.7" rx="0.85" fill="#7a7a7a" stroke="#333" stroke-width="0.7"/><rect x="7.7" y="6.9" width="1" height="0.8" fill="#c8c8c8"/></svg>
<svg class="ab" style="left:46.2px;top:535.01px" width="14.7" height="14.7" viewBox="-10 -10 20 20"><path d="M0.000 -4.500 L8.930 -4.500 A10 10 0 0 0 -8.362 -5.484 L-3.897 2.250 A4.5 4.5 0 0 1 0.000 -4.500 Z" fill="#ea4335"/><path d="M0.000 -4.500 L8.930 -4.500 A10 10 0 0 0 -8.362 -5.484 L-3.897 2.250 A4.5 4.5 0 0 1 0.000 -4.500 Z" fill="#fbbc05" transform="rotate(120)"/><path d="M0.000 -4.500 L8.930 -4.500 A10 10 0 0 0 -8.362 -5.484 L-3.897 2.250 A4.5 4.5 0 0 1 0.000 -4.500 Z" fill="#34a853" transform="rotate(240)"/><circle r="4.15" fill="#fff"/><circle r="3.4" fill="#4285f4"/></svg>
<svg class="ab" style="left:64.2px;top:537.41px" width="9.7" height="9.7" viewBox="-5 -5 10 10"><circle r="5" fill="#222"/><circle cx="0.1" cy="-2.2" r="0.75" fill="#fff"/><path d="M-1.1 -0.7 H0.75 V2.1 H1.4 V2.8 H-1.4 V2.1 H-0.65 V-0.1 H-1.1 Z" fill="#fff"/></svg>
<div class="t" style="left:76.95px;top:535.61px;font-size:11.5px;line-height:13.22px;color:#333;font-weight:bold;transform:scaleX(0.9272);transform-origin:0 0;">[B]</div>
<div class="t" style="left:97.15px;top:535.61px;font-size:11.5px;line-height:13.22px;color:#1f8c26;font-weight:-webkit-text-stroke:0.15px #1f8c26;;transform:scaleX(1.0524);transform-origin:0 0;">n/a - n/a - /siebel/scripts/3rdParty/jstree/jq<span style="color:#444;-webkit-text-stroke:0">...</span></div>
<div class="t" style="left:339.95px;top:535.61px;font-size:11.5px;line-height:13.22px;color:#1f8c26;font-weight:-webkit-text-stroke:0.15px #1f8c26;;transform:scaleX(0.9717);transform-origin:0 0;">HTTP:Request</div>
<div class="t" style="left:458.85px;top:535.61px;font-size:11.5px;line-height:13.22px;color:#444;font-weight:normal;transform:scaleX(1.0162);transform-origin:0 0;">07/29/2019 1:49:07 PM</div>
<div class="t" style="left:612.15px;top:535.61px;font-size:11.5px;line-height:13.22px;color:#444;font-weight:normal;transform:scaleX(1.0180);transform-origin:0 0;">0.606 s</div>
<div class="t" style="left:690.15px;top:535.61px;font-size:11.5px;line-height:13.22px;color:#444;font-weight:normal;transform:scaleX(0.9995);transform-origin:0 0;">0.152 s</div>
<div class="t" style="left:767.45px;top:535.61px;font-size:11.5px;line-height:13.22px;color:#444;font-weight:normal;transform:scaleX(1.0021);transform-origin:0 0;">0.454 s</div>
<div class="ab" style="left:1149.4px;top:533.31px;width:7.4px;height:7.9px;background:#dcdcdc"></div>
<div class="ab" style="left:1156.2px;top:533.31px;width:3.4px;height:7.9px;background:#08c04a"></div>
<div class="ab" style="left:1159px;top:533.31px;width:18.2px;height:7.9px;background:#0399f5"></div>
<div class="ab" style="left:3px;top:576.59px;width:1266px;height:1px;background:#ececec"></div>
<svg class="ab" style="left:23.3px;top:561.6px" width="5" height="7" viewBox="0 0 5 7"><path d="M0.5 0.6 L4.4 3.5 L0.5 6.4 Z" fill="none" stroke="#aaa" stroke-width="0.9"/></svg>
<svg class="ab" style="left:32.4px;top:562px" width="10.2" height="9" viewBox="0 0 10.2 9"><rect x="0" y="0.15" width="10.2" height="2.3" rx="1.1" fill="#cdcdcd"/><rect x="0" y="3.15" width="10.2" height="2.3" rx="1.1" fill="#cdcdcd"/><rect x="0" y="6.15" width="10.2" height="2.3" rx="1.1" fill="#cdcdcd"/></svg>
<div class="ab" style="left:46.1px;top:558.6px;width:14.8px;height:14.4px;background:#f4dc1c"></div>
<div class="t" style="left:50.25px;top:563.88px;font-size:10px;line-height:11.5px;color:#111;font-weight:bold;transform:scaleX(0.8258);transform-origin:0 0;">JS</div>
<div class="t" style="left:63.75px;top:559.3px;font-size:11.5px;line-height:13.22px;color:#333;font-weight:bold;transform:scaleX(0.9084);transform-origin:0 0;-webkit-text-stroke:0.3px #333;">[B]</div>
<div class="t" style="left:83.56px;top:559.3px;font-size:11.5px;line-height:13.22px;color:#555;font-weight:normal;transform:scaleX(1.0627);transform-origin:0 0;">jquery.js</div>
<div class="t" style="left:338.85px;top:559.3px;font-size:11.5px;line-height:13.22px;color:#555;font-weight:;transform:scaleX(0.9820);transform-origin:0 0;">JavaScript:Executi...</div>
<div class="t" style="left:458.85px;top:559.3px;font-size:11.5px;line-height:13.22px;color:#444;font-weight:normal;transform:scaleX(1.0162);transform-origin:0 0;">07/29/2019 1:49:00 PM</div>
<div class="t" style="left:612.15px;top:559.3px;font-size:11.5px;line-height:13.22px;color:#444;font-weight:normal;transform:scaleX(1.0180);transform-origin:0 0;">0.441 s</div>
<div class="t" style="left:767.45px;top:559.3px;font-size:11.5px;line-height:13.22px;color:#444;font-weight:normal;transform:scaleX(1.0021);transform-origin:0 0;">0.441 s</div>
<div class="ab" style="left:838.8px;top:557.1px;width:1.2px;height:8px;background:#7cb0ee"></div>
<div class="ab" style="left:842.8px;top:557.1px;width:1.2px;height:8px;background:#7cb0ee"></div>
<div class="ab" style="left:846px;top:557.1px;width:2px;height:8px;background:#7cb0ee"></div>
<div class="ab" style="left:849px;top:557.1px;width:1px;height:8px;background:#3f89e6"></div>
<div class="ab" style="left:851px;top:557.1px;width:1.8px;height:8px;background:#7cb0ee"></div>
<div class="ab" style="left:867.3px;top:557.1px;width:1.7px;height:8px;background:#bcd7f7"></div>
<div class="ab" style="left:872px;top:557.1px;width:1.5px;height:8px;background:#7cb0ee"></div>
<div class="ab" style="left:899.2px;top:557.1px;width:1.6px;height:8px;background:#7cb0ee"></div>
<div class="ab" style="left:901.8px;top:557.1px;width:1.4px;height:8px;background:#3f89e6"></div>
<div class="ab" style="left:907.1px;top:557.1px;width:1px;height:8px;background:#bcd7f7"></div>
<div class="ab" style="left:909px;top:557.1px;width:2.3px;height:8px;background:#3f89e6"></div>
<div class="ab" style="left:911.3px;top:557.1px;width:2.7px;height:8px;background:#bcd7f7"></div>
<div class="ab" style="left:916.9px;top:557.1px;width:1.2px;height:8px;background:#3f89e6"></div>
<div class="ab" style="left:957.9px;top:557.1px;width:1.9px;height:8px;background:#7cb0ee"></div>
<div class="ab" style="left:1035px;top:557.1px;width:2px;height:8px;background:#7cb0ee"></div>
<div class="ab" style="left:1045.9px;top:557.1px;width:3.2px;height:8px;background:#3f89e6"></div>
<div class="ab" style="left:3px;top:600.28px;width:1266px;height:1px;background:#ececec"></div>
<svg class="ab" style="left:32.3px;top:585px" width="10.2" height="9" viewBox="0 0 10.2 9"><rect x="0.35" y="0.45" width="9.5" height="1.7" rx="0.85" fill="#7a7a7a" stroke="#333" stroke-width="0.7"/><rect x="7.7" y="0.9" width="1" height="0.8" fill="#c8c8c8"/><rect x="0.35" y="3.45" width="9.5" height="1.7" rx="0.85" fill="#7a7a7a" stroke="#333" stroke-width="0.7"/><rect x="7.7" y="3.9" width="1" height="0.8" fill="#c8c8c8"/><rect x="0.35" y="6.45" width="9.5" height="1.7" rx="0.85" fill="#7a7a7a" stroke="#333" stroke-width="0.7"/><rect x="7.7" y="6.9" width="1" height="0.8" fill="#c8c8c8"/></svg>
<svg class="ab" style="left:46.2px;top:582.39px" width="14.7" height="14.7" viewBox="-10 -10 20 20"><path d="M0.000 -4.500 L8.930 -4.500 A10 10 0 0 0 -8.362 -5.484 L-3.897 2.250 A4.5 4.5 0 0 1 0.000 -4.500 Z" fill="#ea4335"/><path d="M0.000 -4.500 L8.930 -4.500 A10 10 0 0 0 -8.362 -5.484 L-3.897 2.250 A4.5 4.5 0 0 1 0.000 -4.500 Z" fill="#fbbc05" transform="rotate(120)"/><path d="M0.000 -4.500 L8.930 -4.500 A10 10 0 0 0 -8.362 -5.484 L-3.897 2.250 A4.5 4.5 0 0 1 0.000 -4.500 Z" fill="#34a853" transform="rotate(240)"/><circle r="4.15" fill="#fff"/><circle r="3.4" fill="#4285f4"/></svg>
<svg class="ab" style="left:64.2px;top:584.79px" width="9.7" height="9.7" viewBox="-5 -5 10 10"><circle r="5" fill="#222"/><circle cx="0.1" cy="-2.2" r="0.75" fill="#fff"/><path d="M-1.1 -0.7 H0.75 V2.1 H1.4 V2.8 H-1.4 V2.1 H-0.65 V-0.1 H-1.1 Z" fill="#fff"/></svg>
<div class="t" style="left:76.95px;top:582.99px;font-size:11.5px;line-height:13.22px;color:#333;font-weight:bold;transform:scaleX(0.9272);transform-origin:0 0;">[B]</div>
<div class="t" style="left:97.15px;top:582.99px;font-size:11.5px;line-height:13.22px;color:#1f8c26;font-weight:-webkit-text-stroke:0.15px #1f8c26;;transform:scaleX(1.0486);transform-origin:0 0;">n/a - n/a - /siebel/scripts/3rdParty/iscroll/is<span style="color:#444;-webkit-text-stroke:0">...</span></div>
<div class="t" style="left:339.95px;top:582.99px;font-size:11.5px;line-height:13.22px;color:#1f8c26;font-weight:-webkit-text-stroke:0.15px #1f8c26;;transform:scaleX(0.9717);transform-origin:0 0;">HTTP:Request</div>
<div class="t" style="left:458.85px;top:582.99px;font-size:11.5px;line-height:13.22px;color:#444;font-weight:normal;transform:scaleX(1.0162);transform-origin:0 0;">07/29/2019 1:49:05 PM</div>
<div class="t" style="left:612.15px;top:582.99px;font-size:11.5px;line-height:13.22px;color:#444;font-weight:normal;transform:scaleX(1.0180);transform-origin:0 0;">0.620 s</div>
<div class="t" style="left:690.15px;top:582.99px;font-size:11.5px;line-height:13.22px;color:#444;font-weight:normal;transform:scaleX(0.9995);transform-origin:0 0;">0.206 s</div>
<div class="t" style="left:767.45px;top:582.99px;font-size:11.5px;line-height:13.22px;color:#444;font-weight:normal;transform:scaleX(1.0021);transform-origin:0 0;">0.414 s</div>
<div class="ab" style="left:1057.9px;top:580.69px;width:9.8px;height:7.9px;background:#dcdcdc"></div>
<div class="ab" style="left:1067.1px;top:580.69px;width:12.4px;height:7.9px;background:#08c04a"></div>
<div class="ab" style="left:1078.9px;top:580.69px;width:7.3px;height:7.9px;background:#0399f5"></div>
<div class="ab" style="left:3px;top:623.97px;width:1266px;height:1px;background:#ececec"></div>
<svg class="ab" style="left:32.3px;top:609px" width="10.2" height="9" viewBox="0 0 10.2 9"><rect x="0.35" y="0.45" width="9.5" height="1.7" rx="0.85" fill="#7a7a7a" stroke="#333" stroke-width="0.7"/><rect x="7.7" y="0.9" width="1" height="0.8" fill="#c8c8c8"/><rect x="0.35" y="3.45" width="9.5" height="1.7" rx="0.85" fill="#7a7a7a" stroke="#333" stroke-width="0.7"/><rect x="7.7" y="3.9" width="1" height="0.8" fill="#c8c8c8"/><rect x="0.35" y="6.45" width="9.5" height="1.7" rx="0.85" fill="#7a7a7a" stroke="#333" stroke-width="0.7"/><rect x="7.7" y="6.9" width="1" height="0.8" fill="#c8c8c8"/></svg>
<svg class="ab" style="left:46.2px;top:606.08px" width="14.7" height="14.7" viewBox="-10 -10 20 20"><path d="M0.000 -4.500 L8.930 -4.500 A10 10 0 0 0 -8.362 -5.484 L-3.897 2.250 A4.5 4.5 0 0 1 0.000 -4.500 Z" fill="#ea4335"/><path d="M0.000 -4.500 L8.930 -4.500 A10 10 0 0 0 -8.362 -5.484 L-3.897 2.250 A4.5 4.5 0 0 1 0.000 -4.500 Z" fill="#fbbc05" transform="rotate(120)"/><path d="M0.000 -4.500 L8.930 -4.500 A10 10 0 0 0 -8.362 -5.484 L-3.897 2.250 A4.5 4.5 0 0 1 0.000 -4.500 Z" fill="#34a853" transform="rotate(240)"/><circle r="4.15" fill="#fff"/><circle r="3.4" fill="#4285f4"/></svg>
<svg class="ab" style="left:64.2px;top:608.48px" width="9.7" height="9.7" viewBox="-5 -5 10 10"><circle r="5" fill="#222"/><circle cx="0.1" cy="-2.2" r="0.75" fill="#fff"/><path d="M-1.1 -0.7 H0.75 V2.1 H1.4 V2.8 H-1.4 V2.1 H-0.65 V-0.1 H-1.1 Z" fill="#fff"/></svg>
<div class="t" style="left:76.95px;top:606.68px;font-size:11.5px;line-height:13.22px;color:#333;font-weight:bold;transform:scaleX(0.9272);transform-origin:0 0;">[B]</div>
<div class="t" style="left:97.15px;top:606.68px;font-size:11.5px;line-height:13.22px;color:#1f8c26;font-weight:-webkit-text-stroke:0.15px #1f8c26;;transform:scaleX(1.0343);transform-origin:0 0;">n/a - n/a - /siebel/scripts/swecommon.js - <span style="color:#444;-webkit-text-stroke:0">...</span></div>
<div class="t" style="left:339.95px;top:606.68px;font-size:11.5px;line-height:13.22px;color:#1f8c26;font-weight:-webkit-text-stroke:0.15px #1f8c26;;transform:scaleX(0.9717);transform-origin:0 0;">HTTP:Request</div>
<div class="t" style="left:458.85px;top:606.68px;font-size:11.5px;line-height:13.22px;color:#444;font-weight:normal;transform:scaleX(1.0162);transform-origin:0 0;">07/29/2019 1:49:01 PM</div>
<div class="t" style="left:612.15px;top:606.68px;font-size:11.5px;line-height:13.22px;color:#444;font-weight:normal;transform:scaleX(1.0180);transform-origin:0 0;">0.491 s</div>
<div class="t" style="left:690.15px;top:606.68px;font-size:11.5px;line-height:13.22px;color:#444;font-weight:normal;transform:scaleX(0.9995);transform-origin:0 0;">0.142 s</div>
<div class="t" style="left:767.45px;top:606.68px;font-size:11.5px;line-height:13.22px;color:#444;font-weight:normal;transform:scaleX(1.0021);transform-origin:0 0;">0.349 s</div>
<div class="ab" style="left:875px;top:604.38px;width:7.6px;height:7.9px;background:#dcdcdc"></div>
<div class="ab" style="left:882px;top:604.38px;width:1.9px;height:7.9px;background:#08c04a"></div>
<div class="ab" style="left:883.3px;top:604.38px;width:14.2px;height:7.9px;background:#0399f5"></div>
<div class="ab" style="left:3px;top:647.66px;width:1266px;height:1px;background:#ececec"></div>
<svg class="ab" style="left:32.3px;top:632px" width="10.2" height="9" viewBox="0 0 10.2 9"><rect x="0.35" y="0.45" width="9.5" height="1.7" rx="0.85" fill="#7a7a7a" stroke="#333" stroke-width="0.7"/><rect x="7.7" y="0.9" width="1" height="0.8" fill="#c8c8c8"/><rect x="0.35" y="3.45" width="9.5" height="1.7" rx="0.85" fill="#7a7a7a" stroke="#333" stroke-width="0.7"/><rect x="7.7" y="3.9" width="1" height="0.8" fill="#c8c8c8"/><rect x="0.35" y="6.45" width="9.5" height="1.7" rx="0.85" fill="#7a7a7a" stroke="#333" stroke-width="0.7"/><rect x="7.7" y="6.9" width="1" height="0.8" fill="#c8c8c8"/></svg>
<svg class="ab" style="left:46.2px;top:629.77px" width="14.7" height="14.7" viewBox="-10 -10 20 20"><path d="M0.000 -4.500 L8.930 -4.500 A10 10 0 0 0 -8.362 -5.484 L-3.897 2.250 A4.5 4.5 0 0 1 0.000 -4.500 Z" fill="#ea4335"/><path d="M0.000 -4.500 L8.930 -4.500 A10 10 0 0 0 -8.362 -5.484 L-3.897 2.250 A4.5 4.5 0 0 1 0.000 -4.500 Z" fill="#fbbc05" transform="rotate(120)"/><path d="M0.000 -4.500 L8.930 -4.500 A10 10 0 0 0 -8.362 -5.484 L-3.897 2.250 A4.5 4.5 0 0 1 0.000 -4.500 Z" fill="#34a853" transform="rotate(240)"/><circle r="4.15" fill="#fff"/><circle r="3.4" fill="#4285f4"/></svg>
<svg class="ab" style="left:64.2px;top:632.17px" width="9.7" height="9.7" viewBox="-5 -5 10 10"><circle r="5" fill="#222"/><circle cx="0.1" cy="-2.2" r="0.75" fill="#fff"/><path d="M-1.1 -0.7 H0.75 V2.1 H1.4 V2.8 H-1.4 V2.1 H-0.65 V-0.1 H-1.1 Z" fill="#fff"/></svg>
<div class="t" style="left:76.95px;top:630.37px;font-size:11.5px;line-height:13.22px;color:#333;font-weight:bold;transform:scaleX(0.9272);transform-origin:0 0;">[B]</div>
<div class="t" style="left:97.15px;top:630.37px;font-size:11.5px;line-height:13.22px;color:#1f8c26;font-weight:-webkit-text-stroke:0.15px #1f8c26;;transform:scaleX(1.0417);transform-origin:0 0;">n/a - n/a - /siebel/scripts/3rdParty/jquery.js<span style="color:#444;-webkit-text-stroke:0">...</span></div>
<div class="t" style="left:339.95px;top:630.37px;font-size:11.5px;line-height:13.22px;color:#1f8c26;font-weight:-webkit-text-stroke:0.15px #1f8c26;;transform:scaleX(0.9717);transform-origin:0 0;">HTTP:Request</div>
<div class="t" style="left:458.85px;top:630.37px;font-size:11.5px;line-height:13.22px;color:#444;font-weight:normal;transform:scaleX(1.0162);transform-origin:0 0;">07/29/2019 1:49:01 PM</div>
<div class="t" style="left:612.15px;top:630.37px;font-size:11.5px;line-height:13.22px;color:#444;font-weight:normal;transform:scaleX(1.0180);transform-origin:0 0;">0.621 s</div>
<div class="t" style="left:690.15px;top:630.37px;font-size:11.5px;line-height:13.22px;color:#444;font-weight:normal;transform:scaleX(0.9995);transform-origin:0 0;">0.226 s</div>
<div class="t" style="left:767.45px;top:630.37px;font-size:11.5px;line-height:13.22px;color:#444;font-weight:normal;transform:scaleX(1.0021);transform-origin:0 0;">0.395 s</div>
<div class="ab" style="left:875px;top:628.07px;width:15.3px;height:7.9px;background:#dcdcdc"></div>
<div class="ab" style="left:889.7px;top:628.07px;width:7.4px;height:7.9px;background:#08c04a"></div>
<div class="ab" style="left:896.5px;top:628.07px;width:7.4px;height:7.9px;background:#0399f5"></div>

<div class="ab" style="left:1269.5px;top:49px;width:13.5px;height:590px;background:#f1f1f1"></div>
<div class="ab" style="left:1270.2px;top:62.5px;width:11.5px;height:343px;background:#c1c1c1;border-left:0.8px solid #aaa;box-sizing:border-box"></div>
<svg class="ab" style="left:1273px;top:54px" width="6.4" height="4" viewBox="0 0 6.4 4"><path d="M0 4 L3.2 0 L6.4 4 Z" fill="#a3a3a3"/></svg>


<div class="ab" style="left:918.7px;top:282.8px;width:351px;height:55px;background:#fff;border:1px solid #dcdcdc;border-bottom-color:#b9b9b9;border-radius:3px;box-shadow:0 1px 3px rgba(0,0,0,0.22);box-sizing:border-box"></div>
<svg class="ab" style="left:1088.6px;top:336.6px" width="11.4" height="6" viewBox="0 0 11.4 6"><path d="M0 0 L5.7 5.4 L11.4 0 Z" fill="#fff"/><path d="M0 0.5 H0.3 L5.7 5.4 L11.1 0.5 H11.4" fill="none" stroke="#a9a9a9" stroke-width="0.9"/></svg>
<div class="t" style="left:926.35px;top:289.97px;font-size:8.5px;line-height:9.77px;color:#444;font-weight:normal;transform:scaleX(0.9838);transform-origin:0 0;">Stalled Duration</div>
<div class="t" style="left:926.35px;top:300.17px;font-size:8.5px;line-height:9.77px;color:#444;font-weight:normal;transform:scaleX(0.9298);transform-origin:0 0;">Wait Duration (TTFB)</div>
<div class="t" style="left:926.35px;top:311.07px;font-size:8.5px;line-height:9.77px;color:#444;font-weight:normal;transform:scaleX(0.9807);transform-origin:0 0;">Download Duration</div>
<div class="t" style="left:926.35px;top:321.77px;font-size:8.5px;line-height:9.77px;color:#333;font-weight:bold;transform:scaleX(0.9587);transform-origin:0 0;">Duration</div>
<svg class="ab" style="left:989.15px;top:289.65px" width="6.1" height="6.1" viewBox="-5 -5 10 10"><circle r="5" fill="#222"/><circle cx="0.1" cy="-2.2" r="0.75" fill="#fff"/><path d="M-1.1 -0.7 H0.75 V2.1 H1.4 V2.8 H-1.4 V2.1 H-0.65 V-0.1 H-1.1 Z" fill="#fff"/></svg>
<svg class="ab" style="left:1004.35px;top:300.35px" width="6.1" height="6.1" viewBox="-5 -5 10 10"><circle r="5" fill="#222"/><circle cx="0.1" cy="-2.2" r="0.75" fill="#fff"/><path d="M-1.1 -0.7 H0.75 V2.1 H1.4 V2.8 H-1.4 V2.1 H-0.65 V-0.1 H-1.1 Z" fill="#fff"/></svg>
<svg class="ab" style="left:1000.45px;top:311.75px" width="6.1" height="6.1" viewBox="-5 -5 10 10"><circle r="5" fill="#222"/><circle cx="0.1" cy="-2.2" r="0.75" fill="#fff"/><path d="M-1.1 -0.7 H0.75 V2.1 H1.4 V2.8 H-1.4 V2.1 H-0.65 V-0.1 H-1.1 Z" fill="#fff"/></svg>
<div class="ab" style="left:1035px;top:291.6px;width:8.1px;height:4.8px;background:#dcdcdc"></div>
<div class="ab" style="left:1043.1px;top:301.9px;width:150.1px;height:5px;background:#08c04a"></div>
<div class="ab" style="left:1193.2px;top:312.4px;width:2.9px;height:5.4px;background:#0399f5"></div>
<div class="t" style="left:1198.15px;top:289.97px;font-size:8.5px;line-height:9.77px;color:#444;font-weight:normal;transform:scaleX(0.9484);transform-origin:0 0;">0.014s</div>
<div class="t" style="left:1198.15px;top:300.17px;font-size:8.5px;line-height:9.77px;color:#444;font-weight:normal;transform:scaleX(0.9484);transform-origin:0 0;">0.238s</div>
<div class="t" style="left:1198.15px;top:310.97px;font-size:8.5px;line-height:9.77px;color:#444;font-weight:normal;transform:scaleX(0.9484);transform-origin:0 0;">0.004s</div>
<div class="t" style="left:1198.15px;top:321.57px;font-size:8.5px;line-height:9.77px;color:#333;font-weight:bold;transform:scaleX(0.9307);transform-origin:0 0;">0.256s</div>

</body></html>
